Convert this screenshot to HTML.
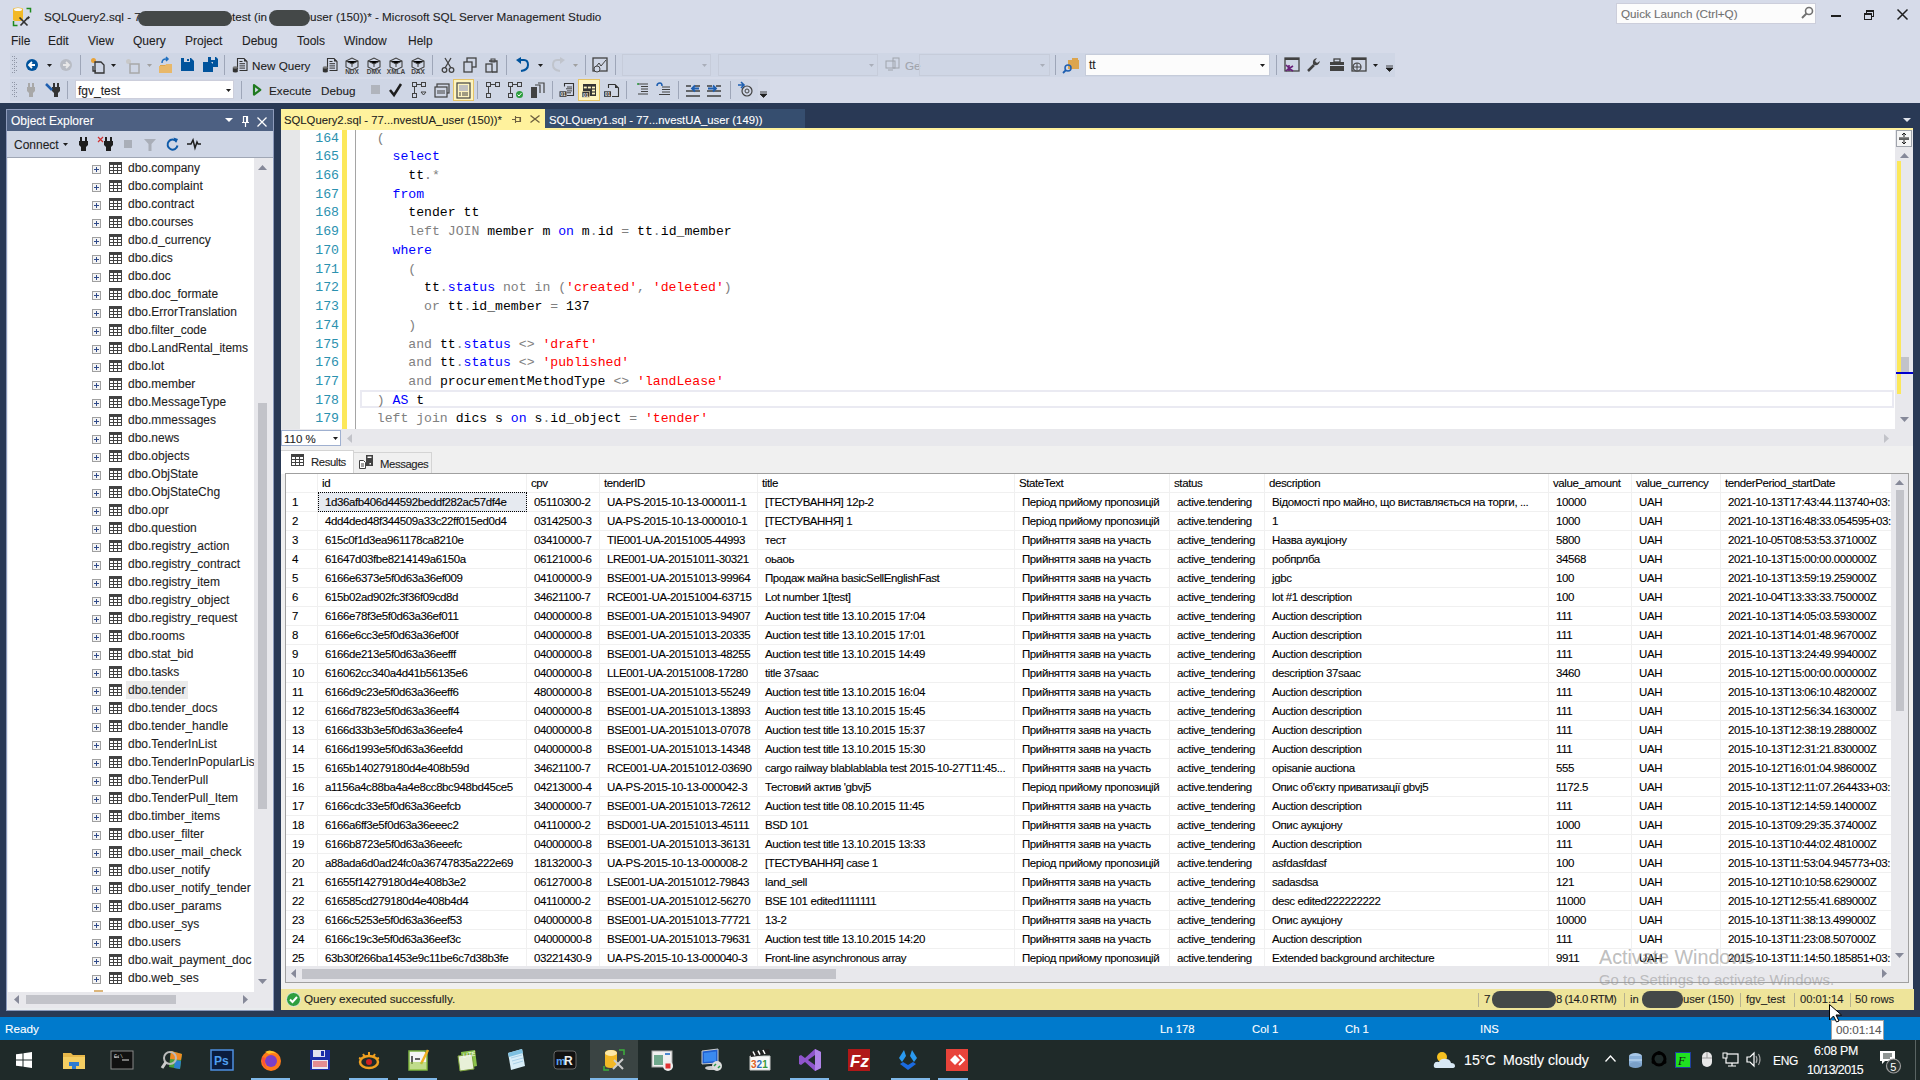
<!DOCTYPE html><html><head><meta charset="utf-8"><style>
html,body{margin:0;padding:0;}
body{width:1920px;height:1080px;overflow:hidden;position:relative;background:#D6DBE9;font-family:"Liberation Sans",sans-serif;font-size:12px;color:#1E1E1E;}
div{position:absolute;box-sizing:border-box;}
.t{white-space:pre;line-height:14px;-webkit-text-stroke:0.1px;}
.m{-webkit-text-stroke:0;}
.m{font-family:"Liberation Mono",monospace;}
svg{position:absolute;overflow:visible;}
</style></head><body>

<svg style="left:12px;top:7px;" width="20" height="20" viewBox="0 0 20 20"><path d="M1 2.5Q1 0.6 6 0.6Q11 0.6 11 2.5V12.5Q11 14 6 14Q1 14 1 12.5Z" fill="#F2B826"/><ellipse cx="6" cy="2.6" rx="4" ry="1.5" fill="#FAFAFA"/><path d="M14.5 1.5H18.5V5.5M1.5 14V18.5H5.5" stroke="#1E8A1E" stroke-width="1.5" fill="none"/><path d="M7.5 10.5L15.5 18.5M8.5 18.5L15.5 11" stroke="#333" stroke-width="1.7"/><path d="M14 11.5l2.5-2.5 1.5 1.5-2 2z" fill="#333"/></svg>
<div class="t" style="left:44px;top:10px;font-size:11.7px;">SQLQuery2.sql - 7</div>
<div style="left:138px;top:11px;width:94px;height:15px;background:#444848;border-radius:8px;"></div>
<div class="t" style="left:232px;top:10px;font-size:11.7px;">test (in</div>
<div style="left:269px;top:10px;width:41px;height:16px;background:#444848;border-radius:8px;"></div>
<div class="t" style="left:310px;top:10px;font-size:11.7px;">user (150))* - Microsoft SQL Server Management Studio</div>
<div style="left:1616px;top:3px;width:200px;height:21px;background:#FCFCFC;border:1px solid #CCCEDB;"></div>
<div class="t" style="left:1621px;top:7px;color:#717171;font-size:11.7px;">Quick Launch (Ctrl+Q)</div>
<svg style="left:1800px;top:6px;" width="13" height="13" viewBox="0 0 13 13"><circle cx="9" cy="5" r="3.5" stroke="#717171" stroke-width="1.6" fill="none"/><path d="M6.5 7.5L2 12" stroke="#717171" stroke-width="2"/></svg>
<div style="left:1831px;top:15px;width:10px;height:2px;background:#1E1E1E;"></div>
<div style="left:1866px;top:10px;width:8px;height:7px;border:1px solid #1E1E1E;border-top-width:2px;"></div>
<div style="left:1864px;top:13px;width:8px;height:7px;border:1px solid #1E1E1E;border-top-width:2px;background:#D6DBE9"></div>
<svg style="left:1897px;top:9px;" width="11" height="11" viewBox="0 0 11 11"><path d="M0.5 0.5L10.5 10.5M10.5 0.5L0.5 10.5" stroke="#1E1E1E" stroke-width="1.5"/></svg>
<div class="t" style="left:11px;top:34px;font-size:12px;">File</div>
<div class="t" style="left:48px;top:34px;font-size:12px;">Edit</div>
<div class="t" style="left:88px;top:34px;font-size:12px;">View</div>
<div class="t" style="left:133px;top:34px;font-size:12px;">Query</div>
<div class="t" style="left:185px;top:34px;font-size:12px;">Project</div>
<div class="t" style="left:242px;top:34px;font-size:12px;">Debug</div>
<div class="t" style="left:297px;top:34px;font-size:12px;">Tools</div>
<div class="t" style="left:344px;top:34px;font-size:12px;">Window</div>
<div class="t" style="left:408px;top:34px;font-size:12px;">Help</div>
<div style="left:10px;top:53px;width:1385px;height:24px;background:#CFD6E5;"></div>
<svg style="left:12px;top:56px;" width="5" height="18" viewBox="0 0 5 18"><rect x="0" y="0" width="1" height="1" fill="#8F96A6"/><rect x="2" y="0" width="1" height="1" fill="#8F96A6"/><rect x="2" y="2" width="1" height="1" fill="#8F96A6"/><rect x="4" y="2" width="1" height="1" fill="#8F96A6"/><rect x="0" y="4" width="1" height="1" fill="#8F96A6"/><rect x="2" y="4" width="1" height="1" fill="#8F96A6"/><rect x="2" y="6" width="1" height="1" fill="#8F96A6"/><rect x="4" y="6" width="1" height="1" fill="#8F96A6"/><rect x="0" y="8" width="1" height="1" fill="#8F96A6"/><rect x="2" y="8" width="1" height="1" fill="#8F96A6"/><rect x="2" y="10" width="1" height="1" fill="#8F96A6"/><rect x="4" y="10" width="1" height="1" fill="#8F96A6"/><rect x="0" y="12" width="1" height="1" fill="#8F96A6"/><rect x="2" y="12" width="1" height="1" fill="#8F96A6"/><rect x="2" y="14" width="1" height="1" fill="#8F96A6"/><rect x="4" y="14" width="1" height="1" fill="#8F96A6"/><rect x="0" y="16" width="1" height="1" fill="#8F96A6"/><rect x="2" y="16" width="1" height="1" fill="#8F96A6"/></svg>
<svg style="left:26px;top:59px;" width="12" height="12" viewBox="0 0 12 12"><circle cx="6" cy="6" r="6" fill="#00539C"/><path d="M9 6H3.5M6 3L3 6L6 9" stroke="#fff" stroke-width="1.8" fill="none"/></svg>
<svg style="left:47px;top:64px;" width="5" height="3" viewBox="0 0 5 3"><path d="M0 0H5L2.5 3Z" fill="#1E1E1E"/></svg>
<svg style="left:60px;top:59px;" width="12" height="12" viewBox="0 0 12 12"><circle cx="6" cy="6" r="6" fill="#B8BCC4"/><path d="M3 6H8.5M6 3L9 6L6 9" stroke="#E8E8E8" stroke-width="1.8" fill="none"/></svg>
<div style="left:80px;top:55px;width:1px;height:20px;background:#9EA6B8;"></div>
<svg style="left:90px;top:57px;" width="16" height="16" viewBox="0 0 16 16"><circle cx="3.5" cy="3.5" r="2.5" fill="#E8A33A"/><path d="M5 5h6l3 3v8H5z" fill="none" stroke="#333" stroke-width="1.3"/><path d="M3 9v5h3" stroke="#333" stroke-width="1.3" fill="none"/></svg>
<svg style="left:111px;top:64px;" width="5" height="3" viewBox="0 0 5 3"><path d="M0 0H5L2.5 3Z" fill="#1E1E1E"/></svg>
<svg style="left:125px;top:58px;" width="16" height="16" viewBox="0 0 16 16"><circle cx="3.5" cy="3.5" r="2.5" fill="#C8C8C8"/><rect x="5" y="6" width="9" height="9" fill="none" stroke="#A8A8A8" stroke-width="1.5"/></svg>
<svg style="left:147px;top:64px;" width="5" height="3" viewBox="0 0 5 3"><path d="M0 0H5L2.5 3Z" fill="#A0A0A0"/></svg>
<svg style="left:158px;top:57px;" width="16" height="16" viewBox="0 0 16 16"><path d="M2 8h12v8H2z" fill="#DCA54E"/><path d="M1 9h6l1-2h6v9H1z" fill="#E8B86A"/><path d="M4 6 Q4 2 8 2h2M8 0l2 2-2 2" stroke="#1F6FC0" stroke-width="1.5" fill="none"/></svg>
<svg style="left:181px;top:58px;" width="14" height="14" viewBox="0 0 14 14"><path d="M0 0h10l3 3v10H0z" fill="#00539C"/><rect x="3" y="0" width="6" height="4" fill="#CFD6E5"/><rect x="6" y="1" width="2" height="2" fill="#00539C"/></svg>
<svg style="left:203px;top:57px;" width="16" height="16" viewBox="0 0 16 16"><path d="M0 5h8l2 2v8H0z" fill="#00539C"/><path d="M5 0h8l2 2v8h-5V5H5z" fill="#00539C"/><rect x="8" y="0" width="4" height="3" fill="#CFD6E5"/></svg>
<div style="left:224px;top:55px;width:1px;height:20px;background:#9EA6B8;"></div>
<svg style="left:232px;top:57px;" width="16" height="16" viewBox="0 0 16 16"><path d="M5.5 12V1.5H12L15 4.5V13.5H7.5" fill="none" stroke="#333" stroke-width="1.1"/><path d="M12 1.5V4.5H15Z" fill="#333"/><path d="M7.5 4.5H10.5M7.5 6.7H13M7.5 8.9H13M7.5 11.1H13" stroke="#333" stroke-width="1"/><rect x="0.8" y="10.5" width="5" height="4" fill="#333"/><ellipse cx="3.3" cy="10.5" rx="2.5" ry="1.2" fill="#777"/><ellipse cx="3.3" cy="14.5" rx="2.5" ry="1" fill="#333"/></svg>
<div class="t" style="left:252px;top:59px;font-size:11.7px;">New Query</div>
<svg style="left:322px;top:57px;" width="16" height="16" viewBox="0 0 16 16"><path d="M5.5 12V1.5H12L15 4.5V13.5H7.5" fill="none" stroke="#333" stroke-width="1.1"/><path d="M12 1.5V4.5H15Z" fill="#333"/><path d="M7.5 4.5H10.5M7.5 6.7H13M7.5 8.9H13M7.5 11.1H13" stroke="#333" stroke-width="1"/><rect x="0.8" y="10.5" width="5" height="4" fill="#333"/><ellipse cx="3.3" cy="10.5" rx="2.5" ry="1.2" fill="#777"/><ellipse cx="3.3" cy="14.5" rx="2.5" ry="1" fill="#333"/></svg>
<svg style="left:344px;top:57px;" width="16" height="17" viewBox="0 0 16 17"><path d="M2 4L8 1L14 4V10L8 13L2 10Z" fill="none" stroke="#424242" stroke-width="1.1"/><path d="M2 4L8 7L14 4M8 7V10" stroke="#424242" stroke-width="1"/><text x="8" y="17" font-size="6.5" font-family="Liberation Sans" font-weight="bold" text-anchor="middle" fill="#424242">NDX</text></svg>
<svg style="left:366px;top:57px;" width="16" height="17" viewBox="0 0 16 17"><path d="M2 4L8 1L14 4V10L8 13L2 10Z" fill="none" stroke="#424242" stroke-width="1.1"/><path d="M2 4L8 7L14 4M8 7V10" stroke="#424242" stroke-width="1"/><text x="8" y="17" font-size="6.5" font-family="Liberation Sans" font-weight="bold" text-anchor="middle" fill="#424242">DMX</text></svg>
<svg style="left:388px;top:57px;" width="16" height="17" viewBox="0 0 16 17"><path d="M2 4L8 1L14 4V10L8 13L2 10Z" fill="none" stroke="#424242" stroke-width="1.1"/><path d="M2 4L8 7L14 4M8 7V10" stroke="#424242" stroke-width="1"/><text x="8" y="17" font-size="6.5" font-family="Liberation Sans" font-weight="bold" text-anchor="middle" fill="#424242">XMLA</text></svg>
<svg style="left:410px;top:57px;" width="16" height="17" viewBox="0 0 16 17"><path d="M2 4L8 1L14 4V10L8 13L2 10Z" fill="none" stroke="#424242" stroke-width="1.1"/><path d="M2 4L8 7L14 4M8 7V10" stroke="#424242" stroke-width="1"/><text x="8" y="17" font-size="6.5" font-family="Liberation Sans" font-weight="bold" text-anchor="middle" fill="#424242">DAX</text></svg>
<div style="left:432px;top:55px;width:1px;height:20px;background:#9EA6B8;"></div>
<svg style="left:441px;top:57px;" width="14" height="16" viewBox="0 0 14 16"><path d="M4 1L10 11M10 1L4 11" stroke="#424242" stroke-width="1.3"/><circle cx="3.5" cy="13" r="2.3" fill="none" stroke="#424242" stroke-width="1.3"/><circle cx="10.5" cy="13" r="2.3" fill="none" stroke="#424242" stroke-width="1.3"/></svg>
<svg style="left:463px;top:57px;" width="14" height="16" viewBox="0 0 14 16"><rect x="4" y="1" width="9" height="9" fill="none" stroke="#424242" stroke-width="1.3"/><rect x="1" y="5" width="8" height="10" fill="#CFD6E5" stroke="#424242" stroke-width="1.3"/></svg>
<svg style="left:485px;top:57px;" width="14" height="16" viewBox="0 0 14 16"><rect x="1" y="7" width="6" height="8" fill="none" stroke="#424242" stroke-width="1.3"/><path d="M4 4h8v11H7" fill="none" stroke="#424242" stroke-width="1.3"/><rect x="6" y="2" width="4" height="3" fill="none" stroke="#424242"/></svg>
<div style="left:506px;top:55px;width:1px;height:20px;background:#9EA6B8;"></div>
<svg style="left:515px;top:57px;" width="15" height="16" viewBox="0 0 15 16"><path d="M4 3 H9 Q13 3 13 8 Q13 13 6 14" stroke="#00539C" stroke-width="2" fill="none"/><path d="M1 3L6 0V7Z" fill="#00539C"/></svg>
<svg style="left:538px;top:64px;" width="5" height="3" viewBox="0 0 5 3"><path d="M0 0H5L2.5 3Z" fill="#1E1E1E"/></svg>
<svg style="left:551px;top:57px;" width="15" height="16" viewBox="0 0 15 16"><path d="M11 3 H6 Q2 3 2 8 Q2 13 9 14" stroke="#C0C4CC" stroke-width="2" fill="none"/><path d="M14 3L9 0V7Z" fill="#C0C4CC"/></svg>
<svg style="left:573px;top:64px;" width="5" height="3" viewBox="0 0 5 3"><path d="M0 0H5L2.5 3Z" fill="#A0A0A0"/></svg>
<div style="left:585px;top:55px;width:1px;height:20px;background:#9EA6B8;"></div>
<svg style="left:592px;top:57px;" width="16" height="16" viewBox="0 0 16 16"><rect x="1" y="1" width="14" height="13" fill="none" stroke="#424242" stroke-width="1.3"/><path d="M3 11L7 6L9 9L14 3" stroke="#424242" fill="none"/><circle cx="5" cy="12" r="3" fill="#CFD6E5" stroke="#424242"/></svg>
<div style="left:615px;top:55px;width:1px;height:20px;background:#9EA6B8;"></div>
<div style="left:622px;top:54px;width:89px;height:22px;border:1px solid #C6CCDA;"></div>
<svg style="left:702px;top:64px;" width="5" height="3" viewBox="0 0 5 3"><path d="M0 0H5L2.5 3Z" fill="#A9AEB9"/></svg>
<div style="left:718px;top:54px;width:160px;height:22px;border:1px solid #C6CCDA;"></div>
<svg style="left:869px;top:64px;" width="5" height="3" viewBox="0 0 5 3"><path d="M0 0H5L2.5 3Z" fill="#A9AEB9"/></svg>
<svg style="left:885px;top:57px;" width="16" height="16" viewBox="0 0 16 16"><rect x="1" y="4" width="9" height="7" fill="none" stroke="#A0A4AC"/><rect x="8" y="1" width="6" height="10" fill="none" stroke="#A0A4AC"/><path d="M3 13h5" stroke="#A0A4AC"/></svg>
<div class="t" style="left:905px;top:59px;color:#A0A4AC;font-size:11.7px;">Ge</div>
<div style="left:919px;top:54px;width:131px;height:22px;border:1px solid #C6CCDA;"></div>
<svg style="left:1040px;top:64px;" width="5" height="3" viewBox="0 0 5 3"><path d="M0 0H5L2.5 3Z" fill="#A9AEB9"/></svg>
<div style="left:1055px;top:55px;width:1px;height:20px;background:#9EA6B8;"></div>
<svg style="left:1063px;top:57px;" width="16" height="16" viewBox="0 0 16 16"><rect x="5" y="3" width="11" height="9" fill="#DCA54E"/><rect x="9" y="1" width="6" height="3" fill="#DCA54E"/><circle cx="5" cy="11" r="3" fill="none" stroke="#1F5FB0" stroke-width="1.5"/><path d="M3 13L0 16" stroke="#1F5FB0" stroke-width="1.8"/></svg>
<div style="left:1085px;top:54px;width:185px;height:22px;background:#FCFCFC;border:1px solid #C6CCDA;"></div>
<div class="t" style="left:1089px;top:58px;font-size:12px;">tt</div>
<svg style="left:1260px;top:64px;" width="5" height="3" viewBox="0 0 5 3"><path d="M0 0H5L2.5 3Z" fill="#1E1E1E"/></svg>
<div style="left:1276px;top:55px;width:1px;height:20px;background:#9EA6B8;"></div>
<svg style="left:1284px;top:57px;" width="16" height="16" viewBox="0 0 16 16"><rect x="1" y="1" width="14" height="13" fill="none" stroke="#424242" stroke-width="1.3"/><rect x="1" y="1" width="14" height="2" fill="#424242"/><path d="M2 8L5 11L2 14M5 8v6M9 9l-4 2.5L9 14" stroke="#68217A" stroke-width="1.6" fill="none"/></svg>
<svg style="left:1306px;top:57px;" width="16" height="16" viewBox="0 0 16 16"><path d="M2 14L8 8" stroke="#424242" stroke-width="2.5"/><path d="M7 7 Q6 2 11 1 L9 4 L11 6 L14 4 Q13 9 8 8" fill="#424242"/></svg>
<svg style="left:1329px;top:58px;" width="16" height="16" viewBox="0 0 16 16"><rect x="1" y="4" width="14" height="9" fill="#424242"/><rect x="5" y="1" width="6" height="3" fill="none" stroke="#424242" stroke-width="1.3"/><rect x="1" y="7" width="14" height="1" fill="#CFD6E5"/></svg>
<svg style="left:1351px;top:57px;" width="16" height="16" viewBox="0 0 16 16"><rect x="1" y="1" width="14" height="13" fill="none" stroke="#424242" stroke-width="1.3"/><rect x="1" y="1" width="14" height="2" fill="#424242"/><circle cx="6" cy="10" r="4" fill="#CFD6E5" stroke="#424242" stroke-width="1.2"/><path d="M2 10h8M6 6v8" stroke="#424242"/></svg>
<svg style="left:1373px;top:64px;" width="5" height="3" viewBox="0 0 5 3"><path d="M0 0H5L2.5 3Z" fill="#1E1E1E"/></svg>
<svg style="left:1386px;top:66px;" width="8" height="6" viewBox="0 0 8 6"><path d="M0 0h7M0 2h7L3.5 5.5Z" stroke="#1E1E1E" fill="#1E1E1E" stroke-width="0.8"/></svg>
<div style="left:10px;top:79px;width:748px;height:22px;background:#CFD6E5;"></div>
<div style="left:758px;top:79px;width:12px;height:22px;background:#D3D9E7;"></div>
<svg style="left:12px;top:82px;" width="5" height="16" viewBox="0 0 5 16"><rect x="0" y="0" width="1" height="1" fill="#8F96A6"/><rect x="2" y="0" width="1" height="1" fill="#8F96A6"/><rect x="2" y="2" width="1" height="1" fill="#8F96A6"/><rect x="4" y="2" width="1" height="1" fill="#8F96A6"/><rect x="0" y="4" width="1" height="1" fill="#8F96A6"/><rect x="2" y="4" width="1" height="1" fill="#8F96A6"/><rect x="2" y="6" width="1" height="1" fill="#8F96A6"/><rect x="4" y="6" width="1" height="1" fill="#8F96A6"/><rect x="0" y="8" width="1" height="1" fill="#8F96A6"/><rect x="2" y="8" width="1" height="1" fill="#8F96A6"/><rect x="2" y="10" width="1" height="1" fill="#8F96A6"/><rect x="4" y="10" width="1" height="1" fill="#8F96A6"/><rect x="0" y="12" width="1" height="1" fill="#8F96A6"/><rect x="2" y="12" width="1" height="1" fill="#8F96A6"/><rect x="2" y="14" width="1" height="1" fill="#8F96A6"/><rect x="4" y="14" width="1" height="1" fill="#8F96A6"/></svg>
<svg style="left:27px;top:83px;" width="8" height="14" viewBox="0 0 8 14"><rect x="1" y="0" width="2" height="4" fill="#A8A8A8"/><rect x="5" y="0" width="2" height="4" fill="#A8A8A8"/><path d="M0 4h8v4l-2 2v4H2v-4L0 8z" fill="#A8A8A8"/></svg>
<svg style="left:45px;top:82px;" width="16" height="16" viewBox="0 0 16 16"><rect x="8" y="1" width="2" height="4" fill="#333"/><rect x="12" y="1" width="2" height="4" fill="#333"/><path d="M7 5h8v4l-2 2v4h-4v-4L7 9z" fill="#333"/><path d="M1 2L7 8" stroke="#1F5FB0" stroke-width="2.5"/></svg>
<div style="left:67px;top:81px;width:1px;height:18px;background:#9EA6B8;"></div>
<div style="left:75px;top:80px;width:159px;height:19px;background:#FFFFFF;border:1px solid #CCCEDB;"></div>
<div class="t" style="left:78px;top:84px;font-size:12px;">fgv_test</div>
<svg style="left:226px;top:89px;" width="5" height="3" viewBox="0 0 5 3"><path d="M0 0H5L2.5 3Z" fill="#1E1E1E"/></svg>
<div style="left:241px;top:81px;width:1px;height:18px;background:#9EA6B8;"></div>
<svg style="left:252px;top:83px;" width="11" height="14" viewBox="0 0 11 14"><path d="M2 2L8.3 6.8L2 11.6Z" fill="#D4DAE8" stroke="#1F7A1F" stroke-width="2.2" stroke-linejoin="round"/></svg>
<div class="t" style="left:269px;top:84px;font-size:11.7px;">Execute</div>
<div class="t" style="left:321px;top:84px;font-size:11.7px;">Debug</div>
<div style="left:371px;top:85px;width:9px;height:9px;background:#B0B4BC;"></div>
<svg style="left:389px;top:83px;" width="13" height="14" viewBox="0 0 13 14"><path d="M1 7L5 12L12 1" stroke="#1E1E1E" stroke-width="2.5" fill="none"/></svg>
<svg style="left:412px;top:82px;" width="15" height="16" viewBox="0 0 15 16"><rect x="0.5" y="0.5" width="4" height="4" fill="none" stroke="#424242"/><rect x="9.5" y="0.5" width="4" height="4" fill="none" stroke="#424242"/><rect x="0.5" y="11.5" width="4" height="4" fill="none" stroke="#424242"/><path d="M5 2.5h4M2.5 5v6M9 10l2.5 3l2.5-3z" stroke="#424242" fill="none"/></svg>
<svg style="left:434px;top:83px;" width="16" height="15" viewBox="0 0 16 15"><rect x="3" y="1" width="12" height="9" fill="none" stroke="#424242" stroke-width="1.2"/><rect x="1" y="4" width="12" height="10" fill="#CFD6E5" stroke="#424242" stroke-width="1.2"/><path d="M3 8h8M3 10h8" stroke="#424242"/></svg>
<div style="left:453px;top:79px;width:21px;height:22px;background:#FDF4BF;border:1px solid #E5C365;"></div>
<svg style="left:456px;top:82px;" width="15" height="17" viewBox="0 0 15 17"><rect x="1" y="1" width="13" height="15" fill="none" stroke="#424242" stroke-width="1.2"/><rect x="3" y="3" width="9" height="6" fill="#C0C0C0"/><path d="M3 11h2M6 11h6M3 13h2M6 13h6" stroke="#424242"/></svg>
<div style="left:477px;top:81px;width:1px;height:18px;background:#9EA6B8;"></div>
<svg style="left:486px;top:82px;" width="15" height="16" viewBox="0 0 15 16"><rect x="0.5" y="0.5" width="4" height="4" fill="none" stroke="#424242"/><rect x="9.5" y="0.5" width="4" height="4" fill="none" stroke="#424242"/><rect x="0.5" y="11.5" width="4" height="4" fill="none" stroke="#424242"/><path d="M5 2.5h4M2.5 5v6" stroke="#424242" fill="none"/></svg>
<svg style="left:508px;top:82px;" width="15" height="16" viewBox="0 0 15 16"><rect x="0.5" y="0.5" width="4" height="4" fill="none" stroke="#424242"/><rect x="9.5" y="0.5" width="4" height="4" fill="none" stroke="#424242"/><rect x="0.5" y="11.5" width="4" height="4" fill="none" stroke="#424242"/><path d="M5 2.5h4M2.5 5v6" stroke="#424242" fill="none"/><circle cx="11.5" cy="12.5" r="3.5" fill="#2E9E3E"/><path d="M9.5 12.5l1.5 1.5 2.5-3" stroke="#fff" fill="none"/></svg>
<svg style="left:530px;top:82px;" width="15" height="16" viewBox="0 0 15 16"><rect x="1" y="5" width="6" height="11" fill="#424242"/><path d="M5 3h5v8M8 1h6v10" fill="none" stroke="#424242" stroke-width="1.2"/></svg>
<div style="left:552px;top:81px;width:1px;height:18px;background:#9EA6B8;"></div>
<svg style="left:559px;top:82px;" width="16" height="16" viewBox="0 0 16 16"><path d="M5.5 4.5V1.5H14.5V13.5H8" fill="none" stroke="#333" stroke-width="1.1"/><path d="M8 5H13M7 6.8H13M8 8.9H13M8 10.8H12" stroke="#333" stroke-width="0.9"/><rect x="0.5" y="9.3" width="7" height="5.5" fill="#333"/><text x="1.2" y="14" font-size="5" font-weight="bold" fill="#E8E8E8" font-family="Liberation Sans">01</text></svg>
<div style="left:578px;top:79px;width:22px;height:22px;background:#FDF4BF;border:1px solid #E5C365;"></div>
<svg style="left:582px;top:83px;" width="16" height="16" viewBox="0 0 16 16"><rect x="1" y="1" width="13" height="12" fill="#333"/><rect x="1.8" y="3.6" width="3" height="1.8" fill="#FDF4BF"/><rect x="5.9" y="3.6" width="3" height="1.8" fill="#FDF4BF"/><rect x="10" y="3.6" width="3" height="1.8" fill="#FDF4BF"/><rect x="10" y="6.6" width="3" height="1.8" fill="#FDF4BF"/><rect x="10" y="9.6" width="3" height="1.8" fill="#FDF4BF"/><rect x="0" y="8.3" width="7.5" height="6" fill="#333" stroke="#FDF4BF" stroke-width="0.6"/><text x="1" y="13.5" font-size="5" font-weight="bold" fill="#E8E8E8" font-family="Liberation Sans">01</text></svg>
<svg style="left:603px;top:82px;" width="16" height="16" viewBox="0 0 16 16"><path d="M5.5 6V2.5H12L15.5 6V14.5H9" fill="none" stroke="#333" stroke-width="1.1"/><path d="M12 2.5V6H15.5Z" fill="#333"/><rect x="1" y="9.3" width="7" height="5.5" fill="#333"/><text x="1.7" y="14" font-size="5" font-weight="bold" fill="#E8E8E8" font-family="Liberation Sans">01</text></svg>
<div style="left:626px;top:81px;width:1px;height:18px;background:#9EA6B8;"></div>
<svg style="left:636px;top:83px;" width="13" height="13" viewBox="0 0 13 13"><path d="M2 1h10M5 3.5h7M5 6h7M5 8.5h7M2 11h10" stroke="#424242" stroke-width="1.1"/><path d="M1 1h2" stroke="#2E9E3E" stroke-width="1.5"/></svg>
<svg style="left:656px;top:82px;" width="15" height="14" viewBox="0 0 15 14"><path d="M1 4 Q1 1 4 1 Q6 1 6 4" stroke="#1F5FB0" stroke-width="1.5" fill="none"/><path d="M6 5h8M6 7.5h8M6 10h8M3 12.5h11" stroke="#424242" stroke-width="1.1"/></svg>
<div style="left:678px;top:81px;width:1px;height:18px;background:#9EA6B8;"></div>
<svg style="left:686px;top:83px;" width="15" height="15" viewBox="0 0 15 15"><path d="M0 3h5M0 8h14M0 13h14M9 3h5" stroke="#424242" stroke-width="1.6"/><path d="M13 5.5H6M9 2.5L6 5.5L9 8.5" stroke="#1F5FB0" stroke-width="1.8" fill="none"/></svg>
<svg style="left:707px;top:83px;" width="15" height="15" viewBox="0 0 15 15"><path d="M0 3h5M0 8h14M0 13h14M9 3h5" stroke="#424242" stroke-width="1.6"/><path d="M1 5.5H9M6 2.5L9 5.5L6 8.5" stroke="#1F5FB0" stroke-width="1.8" fill="none"/></svg>
<div style="left:730px;top:81px;width:1px;height:18px;background:#9EA6B8;"></div>
<svg style="left:737px;top:82px;" width="16" height="16" viewBox="0 0 16 16"><circle cx="10" cy="9" r="5" fill="none" stroke="#424242" stroke-width="1.2"/><circle cx="10" cy="9" r="2" fill="none" stroke="#424242"/><path d="M1 3h6M4 0l3 3-3 3" stroke="#1F5FB0" stroke-width="1.6" fill="none"/></svg>
<svg style="left:760px;top:92px;" width="8" height="6" viewBox="0 0 8 6"><path d="M0 0h7M0 2h7L3.5 5.5Z" stroke="#1E1E1E" fill="#1E1E1E" stroke-width="0.8"/></svg>
<div style="left:0px;top:103px;width:1920px;height:914px;background:#293955;"></div>
<div style="left:6px;top:109px;width:268px;height:902px;background:#E9ECEE;border:1px solid #8E9BBC;"></div>
<div style="left:7px;top:110px;width:266px;height:21px;background:#4D6082;"></div>
<div class="t" style="left:11px;top:114px;color:#FFFFFF;font-size:12px;">Object Explorer</div>
<svg style="left:225px;top:118px;" width="8" height="4" viewBox="0 0 8 4"><path d="M0 0H8L4 4Z" fill="#fff"/></svg>
<svg style="left:242px;top:116px;" width="7" height="11" viewBox="0 0 7 11"><path d="M1.5 0.5h4v6h-4z M0 6.5h7 M3.5 6.5v4.5" stroke="#fff" stroke-width="1.2" fill="none"/><rect x="4" y="1" width="1.5" height="5.5" fill="#fff"/></svg>
<svg style="left:257px;top:117px;" width="10" height="10" viewBox="0 0 10 10"><path d="M0.5 0.5L9.5 9.5M9.5 0.5L0.5 9.5" stroke="#fff" stroke-width="1.3"/></svg>
<div style="left:7px;top:131px;width:266px;height:27px;background:#CFD6E5;"></div>
<div class="t" style="left:14px;top:138px;font-size:12px;">Connect</div>
<svg style="left:63px;top:143px;" width="5" height="3" viewBox="0 0 5 3"><path d="M0 0H5L2.5 3Z" fill="#1E1E1E"/></svg>
<svg style="left:79px;top:137px;" width="9" height="14" viewBox="0 0 9 14"><rect x="1" y="0" width="2" height="4" fill="#1E1E1E"/><rect x="6" y="0" width="2" height="4" fill="#1E1E1E"/><path d="M0 4h9v4l-2 2v4H2v-4L0 8z" fill="#1E1E1E"/></svg>
<svg style="left:98px;top:137px;" width="15" height="14" viewBox="0 0 15 14"><path d="M0 0L5 5M5 0L0 5" stroke="#D03030" stroke-width="1.2"/><rect x="7" y="0" width="2" height="4" fill="#1E1E1E"/><rect x="12" y="0" width="2" height="4" fill="#1E1E1E"/><path d="M6 4h9v4l-2 2v4H8v-4L6 8z" fill="#1E1E1E"/></svg>
<div style="left:124px;top:140px;width:8px;height:8px;background:#A9AEB8;"></div>
<svg style="left:144px;top:139px;" width="12" height="12" viewBox="0 0 12 12"><path d="M0 0H12L7.5 5V12H4.5V5Z" fill="#A9AEB8"/></svg>
<svg style="left:166px;top:137px;" width="13" height="14" viewBox="0 0 13 14"><path d="M10.5 4.5 A5 5 0 1 0 11.5 8.5" stroke="#0E5AA8" stroke-width="2" fill="none"/><path d="M7.5 0.5L12 2L10 6Z" fill="#0E5AA8"/></svg>
<svg style="left:187px;top:137px;" width="14" height="13" viewBox="0 0 14 13"><path d="M0 7H4L6 3L8 11L10 5L11 7H14" stroke="#1E1E1E" stroke-width="1.5" fill="none"/></svg>
<div style="left:7px;top:157px;width:266px;height:1px;background:#A0A7B5;"></div>
<div style="left:8px;top:158px;width:246px;height:834px;background:#FFFFFF;"></div>
<div style="left:254px;top:158px;width:18px;height:834px;background:#E8E8EC;"></div>
<svg style="left:258px;top:165px;" width="9" height="5" viewBox="0 0 9 5"><path d="M0 5H9L4.5 0Z" fill="#868999"/></svg>
<svg style="left:258px;top:979px;" width="9" height="5" viewBox="0 0 9 5"><path d="M0 0H9L4.5 5Z" fill="#868999"/></svg>
<div style="left:258px;top:403px;width:9px;height:406px;background:#C2C3C9;"></div>
<div style="left:8px;top:158px;width:246px;height:834px;overflow:hidden;">
<div style="left:118px;top:523px;width:62px;height:18px;background:#EBEBEB;"></div>
<div style="left:84px;top:7px;width:9px;height:9px;border:1px solid #A0A0A0;background:#F4F4F4;"></div>
<div style="left:86px;top:11px;width:5px;height:1px;background:#2F4A8A;"></div>
<div style="left:88px;top:9px;width:1px;height:5px;background:#2F4A8A;"></div>
<svg style="left:101px;top:4px" width="13" height="12" viewBox="0 0 13 12"><rect x="0" y="0" width="13" height="12" fill="#424242"/><g fill="#fff"><rect x="1" y="3" width="3" height="2"/><rect x="5" y="3" width="3" height="2"/><rect x="9" y="3" width="3" height="2"/><rect x="1" y="6" width="3" height="2"/><rect x="5" y="6" width="3" height="2"/><rect x="9" y="6" width="3" height="2"/><rect x="1" y="9" width="3" height="2"/><rect x="5" y="9" width="3" height="2"/><rect x="9" y="9" width="3" height="2"/></g></svg>
<div class="t" style="left:120px;top:3px;font-size:12px;color:#1E1E1E;">dbo.company</div>
<div style="left:84px;top:25px;width:9px;height:9px;border:1px solid #A0A0A0;background:#F4F4F4;"></div>
<div style="left:86px;top:29px;width:5px;height:1px;background:#2F4A8A;"></div>
<div style="left:88px;top:27px;width:1px;height:5px;background:#2F4A8A;"></div>
<svg style="left:101px;top:22px" width="13" height="12" viewBox="0 0 13 12"><rect x="0" y="0" width="13" height="12" fill="#424242"/><g fill="#fff"><rect x="1" y="3" width="3" height="2"/><rect x="5" y="3" width="3" height="2"/><rect x="9" y="3" width="3" height="2"/><rect x="1" y="6" width="3" height="2"/><rect x="5" y="6" width="3" height="2"/><rect x="9" y="6" width="3" height="2"/><rect x="1" y="9" width="3" height="2"/><rect x="5" y="9" width="3" height="2"/><rect x="9" y="9" width="3" height="2"/></g></svg>
<div class="t" style="left:120px;top:21px;font-size:12px;color:#1E1E1E;">dbo.complaint</div>
<div style="left:84px;top:43px;width:9px;height:9px;border:1px solid #A0A0A0;background:#F4F4F4;"></div>
<div style="left:86px;top:47px;width:5px;height:1px;background:#2F4A8A;"></div>
<div style="left:88px;top:45px;width:1px;height:5px;background:#2F4A8A;"></div>
<svg style="left:101px;top:40px" width="13" height="12" viewBox="0 0 13 12"><rect x="0" y="0" width="13" height="12" fill="#424242"/><g fill="#fff"><rect x="1" y="3" width="3" height="2"/><rect x="5" y="3" width="3" height="2"/><rect x="9" y="3" width="3" height="2"/><rect x="1" y="6" width="3" height="2"/><rect x="5" y="6" width="3" height="2"/><rect x="9" y="6" width="3" height="2"/><rect x="1" y="9" width="3" height="2"/><rect x="5" y="9" width="3" height="2"/><rect x="9" y="9" width="3" height="2"/></g></svg>
<div class="t" style="left:120px;top:39px;font-size:12px;color:#1E1E1E;">dbo.contract</div>
<div style="left:84px;top:61px;width:9px;height:9px;border:1px solid #A0A0A0;background:#F4F4F4;"></div>
<div style="left:86px;top:65px;width:5px;height:1px;background:#2F4A8A;"></div>
<div style="left:88px;top:63px;width:1px;height:5px;background:#2F4A8A;"></div>
<svg style="left:101px;top:58px" width="13" height="12" viewBox="0 0 13 12"><rect x="0" y="0" width="13" height="12" fill="#424242"/><g fill="#fff"><rect x="1" y="3" width="3" height="2"/><rect x="5" y="3" width="3" height="2"/><rect x="9" y="3" width="3" height="2"/><rect x="1" y="6" width="3" height="2"/><rect x="5" y="6" width="3" height="2"/><rect x="9" y="6" width="3" height="2"/><rect x="1" y="9" width="3" height="2"/><rect x="5" y="9" width="3" height="2"/><rect x="9" y="9" width="3" height="2"/></g></svg>
<div class="t" style="left:120px;top:57px;font-size:12px;color:#1E1E1E;">dbo.courses</div>
<div style="left:84px;top:79px;width:9px;height:9px;border:1px solid #A0A0A0;background:#F4F4F4;"></div>
<div style="left:86px;top:83px;width:5px;height:1px;background:#2F4A8A;"></div>
<div style="left:88px;top:81px;width:1px;height:5px;background:#2F4A8A;"></div>
<svg style="left:101px;top:76px" width="13" height="12" viewBox="0 0 13 12"><rect x="0" y="0" width="13" height="12" fill="#424242"/><g fill="#fff"><rect x="1" y="3" width="3" height="2"/><rect x="5" y="3" width="3" height="2"/><rect x="9" y="3" width="3" height="2"/><rect x="1" y="6" width="3" height="2"/><rect x="5" y="6" width="3" height="2"/><rect x="9" y="6" width="3" height="2"/><rect x="1" y="9" width="3" height="2"/><rect x="5" y="9" width="3" height="2"/><rect x="9" y="9" width="3" height="2"/></g></svg>
<div class="t" style="left:120px;top:75px;font-size:12px;color:#1E1E1E;">dbo.d_currency</div>
<div style="left:84px;top:97px;width:9px;height:9px;border:1px solid #A0A0A0;background:#F4F4F4;"></div>
<div style="left:86px;top:101px;width:5px;height:1px;background:#2F4A8A;"></div>
<div style="left:88px;top:99px;width:1px;height:5px;background:#2F4A8A;"></div>
<svg style="left:101px;top:94px" width="13" height="12" viewBox="0 0 13 12"><rect x="0" y="0" width="13" height="12" fill="#424242"/><g fill="#fff"><rect x="1" y="3" width="3" height="2"/><rect x="5" y="3" width="3" height="2"/><rect x="9" y="3" width="3" height="2"/><rect x="1" y="6" width="3" height="2"/><rect x="5" y="6" width="3" height="2"/><rect x="9" y="6" width="3" height="2"/><rect x="1" y="9" width="3" height="2"/><rect x="5" y="9" width="3" height="2"/><rect x="9" y="9" width="3" height="2"/></g></svg>
<div class="t" style="left:120px;top:93px;font-size:12px;color:#1E1E1E;">dbo.dics</div>
<div style="left:84px;top:115px;width:9px;height:9px;border:1px solid #A0A0A0;background:#F4F4F4;"></div>
<div style="left:86px;top:119px;width:5px;height:1px;background:#2F4A8A;"></div>
<div style="left:88px;top:117px;width:1px;height:5px;background:#2F4A8A;"></div>
<svg style="left:101px;top:112px" width="13" height="12" viewBox="0 0 13 12"><rect x="0" y="0" width="13" height="12" fill="#424242"/><g fill="#fff"><rect x="1" y="3" width="3" height="2"/><rect x="5" y="3" width="3" height="2"/><rect x="9" y="3" width="3" height="2"/><rect x="1" y="6" width="3" height="2"/><rect x="5" y="6" width="3" height="2"/><rect x="9" y="6" width="3" height="2"/><rect x="1" y="9" width="3" height="2"/><rect x="5" y="9" width="3" height="2"/><rect x="9" y="9" width="3" height="2"/></g></svg>
<div class="t" style="left:120px;top:111px;font-size:12px;color:#1E1E1E;">dbo.doc</div>
<div style="left:84px;top:133px;width:9px;height:9px;border:1px solid #A0A0A0;background:#F4F4F4;"></div>
<div style="left:86px;top:137px;width:5px;height:1px;background:#2F4A8A;"></div>
<div style="left:88px;top:135px;width:1px;height:5px;background:#2F4A8A;"></div>
<svg style="left:101px;top:130px" width="13" height="12" viewBox="0 0 13 12"><rect x="0" y="0" width="13" height="12" fill="#424242"/><g fill="#fff"><rect x="1" y="3" width="3" height="2"/><rect x="5" y="3" width="3" height="2"/><rect x="9" y="3" width="3" height="2"/><rect x="1" y="6" width="3" height="2"/><rect x="5" y="6" width="3" height="2"/><rect x="9" y="6" width="3" height="2"/><rect x="1" y="9" width="3" height="2"/><rect x="5" y="9" width="3" height="2"/><rect x="9" y="9" width="3" height="2"/></g></svg>
<div class="t" style="left:120px;top:129px;font-size:12px;color:#1E1E1E;">dbo.doc_formate</div>
<div style="left:84px;top:151px;width:9px;height:9px;border:1px solid #A0A0A0;background:#F4F4F4;"></div>
<div style="left:86px;top:155px;width:5px;height:1px;background:#2F4A8A;"></div>
<div style="left:88px;top:153px;width:1px;height:5px;background:#2F4A8A;"></div>
<svg style="left:101px;top:148px" width="13" height="12" viewBox="0 0 13 12"><rect x="0" y="0" width="13" height="12" fill="#424242"/><g fill="#fff"><rect x="1" y="3" width="3" height="2"/><rect x="5" y="3" width="3" height="2"/><rect x="9" y="3" width="3" height="2"/><rect x="1" y="6" width="3" height="2"/><rect x="5" y="6" width="3" height="2"/><rect x="9" y="6" width="3" height="2"/><rect x="1" y="9" width="3" height="2"/><rect x="5" y="9" width="3" height="2"/><rect x="9" y="9" width="3" height="2"/></g></svg>
<div class="t" style="left:120px;top:147px;font-size:12px;color:#1E1E1E;">dbo.ErrorTranslation</div>
<div style="left:84px;top:169px;width:9px;height:9px;border:1px solid #A0A0A0;background:#F4F4F4;"></div>
<div style="left:86px;top:173px;width:5px;height:1px;background:#2F4A8A;"></div>
<div style="left:88px;top:171px;width:1px;height:5px;background:#2F4A8A;"></div>
<svg style="left:101px;top:166px" width="13" height="12" viewBox="0 0 13 12"><rect x="0" y="0" width="13" height="12" fill="#424242"/><g fill="#fff"><rect x="1" y="3" width="3" height="2"/><rect x="5" y="3" width="3" height="2"/><rect x="9" y="3" width="3" height="2"/><rect x="1" y="6" width="3" height="2"/><rect x="5" y="6" width="3" height="2"/><rect x="9" y="6" width="3" height="2"/><rect x="1" y="9" width="3" height="2"/><rect x="5" y="9" width="3" height="2"/><rect x="9" y="9" width="3" height="2"/></g></svg>
<div class="t" style="left:120px;top:165px;font-size:12px;color:#1E1E1E;">dbo.filter_code</div>
<div style="left:84px;top:187px;width:9px;height:9px;border:1px solid #A0A0A0;background:#F4F4F4;"></div>
<div style="left:86px;top:191px;width:5px;height:1px;background:#2F4A8A;"></div>
<div style="left:88px;top:189px;width:1px;height:5px;background:#2F4A8A;"></div>
<svg style="left:101px;top:184px" width="13" height="12" viewBox="0 0 13 12"><rect x="0" y="0" width="13" height="12" fill="#424242"/><g fill="#fff"><rect x="1" y="3" width="3" height="2"/><rect x="5" y="3" width="3" height="2"/><rect x="9" y="3" width="3" height="2"/><rect x="1" y="6" width="3" height="2"/><rect x="5" y="6" width="3" height="2"/><rect x="9" y="6" width="3" height="2"/><rect x="1" y="9" width="3" height="2"/><rect x="5" y="9" width="3" height="2"/><rect x="9" y="9" width="3" height="2"/></g></svg>
<div class="t" style="left:120px;top:183px;font-size:12px;color:#1E1E1E;">dbo.LandRental_items</div>
<div style="left:84px;top:205px;width:9px;height:9px;border:1px solid #A0A0A0;background:#F4F4F4;"></div>
<div style="left:86px;top:209px;width:5px;height:1px;background:#2F4A8A;"></div>
<div style="left:88px;top:207px;width:1px;height:5px;background:#2F4A8A;"></div>
<svg style="left:101px;top:202px" width="13" height="12" viewBox="0 0 13 12"><rect x="0" y="0" width="13" height="12" fill="#424242"/><g fill="#fff"><rect x="1" y="3" width="3" height="2"/><rect x="5" y="3" width="3" height="2"/><rect x="9" y="3" width="3" height="2"/><rect x="1" y="6" width="3" height="2"/><rect x="5" y="6" width="3" height="2"/><rect x="9" y="6" width="3" height="2"/><rect x="1" y="9" width="3" height="2"/><rect x="5" y="9" width="3" height="2"/><rect x="9" y="9" width="3" height="2"/></g></svg>
<div class="t" style="left:120px;top:201px;font-size:12px;color:#1E1E1E;">dbo.lot</div>
<div style="left:84px;top:223px;width:9px;height:9px;border:1px solid #A0A0A0;background:#F4F4F4;"></div>
<div style="left:86px;top:227px;width:5px;height:1px;background:#2F4A8A;"></div>
<div style="left:88px;top:225px;width:1px;height:5px;background:#2F4A8A;"></div>
<svg style="left:101px;top:220px" width="13" height="12" viewBox="0 0 13 12"><rect x="0" y="0" width="13" height="12" fill="#424242"/><g fill="#fff"><rect x="1" y="3" width="3" height="2"/><rect x="5" y="3" width="3" height="2"/><rect x="9" y="3" width="3" height="2"/><rect x="1" y="6" width="3" height="2"/><rect x="5" y="6" width="3" height="2"/><rect x="9" y="6" width="3" height="2"/><rect x="1" y="9" width="3" height="2"/><rect x="5" y="9" width="3" height="2"/><rect x="9" y="9" width="3" height="2"/></g></svg>
<div class="t" style="left:120px;top:219px;font-size:12px;color:#1E1E1E;">dbo.member</div>
<div style="left:84px;top:241px;width:9px;height:9px;border:1px solid #A0A0A0;background:#F4F4F4;"></div>
<div style="left:86px;top:245px;width:5px;height:1px;background:#2F4A8A;"></div>
<div style="left:88px;top:243px;width:1px;height:5px;background:#2F4A8A;"></div>
<svg style="left:101px;top:238px" width="13" height="12" viewBox="0 0 13 12"><rect x="0" y="0" width="13" height="12" fill="#424242"/><g fill="#fff"><rect x="1" y="3" width="3" height="2"/><rect x="5" y="3" width="3" height="2"/><rect x="9" y="3" width="3" height="2"/><rect x="1" y="6" width="3" height="2"/><rect x="5" y="6" width="3" height="2"/><rect x="9" y="6" width="3" height="2"/><rect x="1" y="9" width="3" height="2"/><rect x="5" y="9" width="3" height="2"/><rect x="9" y="9" width="3" height="2"/></g></svg>
<div class="t" style="left:120px;top:237px;font-size:12px;color:#1E1E1E;">dbo.MessageType</div>
<div style="left:84px;top:259px;width:9px;height:9px;border:1px solid #A0A0A0;background:#F4F4F4;"></div>
<div style="left:86px;top:263px;width:5px;height:1px;background:#2F4A8A;"></div>
<div style="left:88px;top:261px;width:1px;height:5px;background:#2F4A8A;"></div>
<svg style="left:101px;top:256px" width="13" height="12" viewBox="0 0 13 12"><rect x="0" y="0" width="13" height="12" fill="#424242"/><g fill="#fff"><rect x="1" y="3" width="3" height="2"/><rect x="5" y="3" width="3" height="2"/><rect x="9" y="3" width="3" height="2"/><rect x="1" y="6" width="3" height="2"/><rect x="5" y="6" width="3" height="2"/><rect x="9" y="6" width="3" height="2"/><rect x="1" y="9" width="3" height="2"/><rect x="5" y="9" width="3" height="2"/><rect x="9" y="9" width="3" height="2"/></g></svg>
<div class="t" style="left:120px;top:255px;font-size:12px;color:#1E1E1E;">dbo.mmessages</div>
<div style="left:84px;top:277px;width:9px;height:9px;border:1px solid #A0A0A0;background:#F4F4F4;"></div>
<div style="left:86px;top:281px;width:5px;height:1px;background:#2F4A8A;"></div>
<div style="left:88px;top:279px;width:1px;height:5px;background:#2F4A8A;"></div>
<svg style="left:101px;top:274px" width="13" height="12" viewBox="0 0 13 12"><rect x="0" y="0" width="13" height="12" fill="#424242"/><g fill="#fff"><rect x="1" y="3" width="3" height="2"/><rect x="5" y="3" width="3" height="2"/><rect x="9" y="3" width="3" height="2"/><rect x="1" y="6" width="3" height="2"/><rect x="5" y="6" width="3" height="2"/><rect x="9" y="6" width="3" height="2"/><rect x="1" y="9" width="3" height="2"/><rect x="5" y="9" width="3" height="2"/><rect x="9" y="9" width="3" height="2"/></g></svg>
<div class="t" style="left:120px;top:273px;font-size:12px;color:#1E1E1E;">dbo.news</div>
<div style="left:84px;top:295px;width:9px;height:9px;border:1px solid #A0A0A0;background:#F4F4F4;"></div>
<div style="left:86px;top:299px;width:5px;height:1px;background:#2F4A8A;"></div>
<div style="left:88px;top:297px;width:1px;height:5px;background:#2F4A8A;"></div>
<svg style="left:101px;top:292px" width="13" height="12" viewBox="0 0 13 12"><rect x="0" y="0" width="13" height="12" fill="#424242"/><g fill="#fff"><rect x="1" y="3" width="3" height="2"/><rect x="5" y="3" width="3" height="2"/><rect x="9" y="3" width="3" height="2"/><rect x="1" y="6" width="3" height="2"/><rect x="5" y="6" width="3" height="2"/><rect x="9" y="6" width="3" height="2"/><rect x="1" y="9" width="3" height="2"/><rect x="5" y="9" width="3" height="2"/><rect x="9" y="9" width="3" height="2"/></g></svg>
<div class="t" style="left:120px;top:291px;font-size:12px;color:#1E1E1E;">dbo.objects</div>
<div style="left:84px;top:313px;width:9px;height:9px;border:1px solid #A0A0A0;background:#F4F4F4;"></div>
<div style="left:86px;top:317px;width:5px;height:1px;background:#2F4A8A;"></div>
<div style="left:88px;top:315px;width:1px;height:5px;background:#2F4A8A;"></div>
<svg style="left:101px;top:310px" width="13" height="12" viewBox="0 0 13 12"><rect x="0" y="0" width="13" height="12" fill="#424242"/><g fill="#fff"><rect x="1" y="3" width="3" height="2"/><rect x="5" y="3" width="3" height="2"/><rect x="9" y="3" width="3" height="2"/><rect x="1" y="6" width="3" height="2"/><rect x="5" y="6" width="3" height="2"/><rect x="9" y="6" width="3" height="2"/><rect x="1" y="9" width="3" height="2"/><rect x="5" y="9" width="3" height="2"/><rect x="9" y="9" width="3" height="2"/></g></svg>
<div class="t" style="left:120px;top:309px;font-size:12px;color:#1E1E1E;">dbo.ObjState</div>
<div style="left:84px;top:331px;width:9px;height:9px;border:1px solid #A0A0A0;background:#F4F4F4;"></div>
<div style="left:86px;top:335px;width:5px;height:1px;background:#2F4A8A;"></div>
<div style="left:88px;top:333px;width:1px;height:5px;background:#2F4A8A;"></div>
<svg style="left:101px;top:328px" width="13" height="12" viewBox="0 0 13 12"><rect x="0" y="0" width="13" height="12" fill="#424242"/><g fill="#fff"><rect x="1" y="3" width="3" height="2"/><rect x="5" y="3" width="3" height="2"/><rect x="9" y="3" width="3" height="2"/><rect x="1" y="6" width="3" height="2"/><rect x="5" y="6" width="3" height="2"/><rect x="9" y="6" width="3" height="2"/><rect x="1" y="9" width="3" height="2"/><rect x="5" y="9" width="3" height="2"/><rect x="9" y="9" width="3" height="2"/></g></svg>
<div class="t" style="left:120px;top:327px;font-size:12px;color:#1E1E1E;">dbo.ObjStateChg</div>
<div style="left:84px;top:349px;width:9px;height:9px;border:1px solid #A0A0A0;background:#F4F4F4;"></div>
<div style="left:86px;top:353px;width:5px;height:1px;background:#2F4A8A;"></div>
<div style="left:88px;top:351px;width:1px;height:5px;background:#2F4A8A;"></div>
<svg style="left:101px;top:346px" width="13" height="12" viewBox="0 0 13 12"><rect x="0" y="0" width="13" height="12" fill="#424242"/><g fill="#fff"><rect x="1" y="3" width="3" height="2"/><rect x="5" y="3" width="3" height="2"/><rect x="9" y="3" width="3" height="2"/><rect x="1" y="6" width="3" height="2"/><rect x="5" y="6" width="3" height="2"/><rect x="9" y="6" width="3" height="2"/><rect x="1" y="9" width="3" height="2"/><rect x="5" y="9" width="3" height="2"/><rect x="9" y="9" width="3" height="2"/></g></svg>
<div class="t" style="left:120px;top:345px;font-size:12px;color:#1E1E1E;">dbo.opr</div>
<div style="left:84px;top:367px;width:9px;height:9px;border:1px solid #A0A0A0;background:#F4F4F4;"></div>
<div style="left:86px;top:371px;width:5px;height:1px;background:#2F4A8A;"></div>
<div style="left:88px;top:369px;width:1px;height:5px;background:#2F4A8A;"></div>
<svg style="left:101px;top:364px" width="13" height="12" viewBox="0 0 13 12"><rect x="0" y="0" width="13" height="12" fill="#424242"/><g fill="#fff"><rect x="1" y="3" width="3" height="2"/><rect x="5" y="3" width="3" height="2"/><rect x="9" y="3" width="3" height="2"/><rect x="1" y="6" width="3" height="2"/><rect x="5" y="6" width="3" height="2"/><rect x="9" y="6" width="3" height="2"/><rect x="1" y="9" width="3" height="2"/><rect x="5" y="9" width="3" height="2"/><rect x="9" y="9" width="3" height="2"/></g></svg>
<div class="t" style="left:120px;top:363px;font-size:12px;color:#1E1E1E;">dbo.question</div>
<div style="left:84px;top:385px;width:9px;height:9px;border:1px solid #A0A0A0;background:#F4F4F4;"></div>
<div style="left:86px;top:389px;width:5px;height:1px;background:#2F4A8A;"></div>
<div style="left:88px;top:387px;width:1px;height:5px;background:#2F4A8A;"></div>
<svg style="left:101px;top:382px" width="13" height="12" viewBox="0 0 13 12"><rect x="0" y="0" width="13" height="12" fill="#424242"/><g fill="#fff"><rect x="1" y="3" width="3" height="2"/><rect x="5" y="3" width="3" height="2"/><rect x="9" y="3" width="3" height="2"/><rect x="1" y="6" width="3" height="2"/><rect x="5" y="6" width="3" height="2"/><rect x="9" y="6" width="3" height="2"/><rect x="1" y="9" width="3" height="2"/><rect x="5" y="9" width="3" height="2"/><rect x="9" y="9" width="3" height="2"/></g></svg>
<div class="t" style="left:120px;top:381px;font-size:12px;color:#1E1E1E;">dbo.registry_action</div>
<div style="left:84px;top:403px;width:9px;height:9px;border:1px solid #A0A0A0;background:#F4F4F4;"></div>
<div style="left:86px;top:407px;width:5px;height:1px;background:#2F4A8A;"></div>
<div style="left:88px;top:405px;width:1px;height:5px;background:#2F4A8A;"></div>
<svg style="left:101px;top:400px" width="13" height="12" viewBox="0 0 13 12"><rect x="0" y="0" width="13" height="12" fill="#424242"/><g fill="#fff"><rect x="1" y="3" width="3" height="2"/><rect x="5" y="3" width="3" height="2"/><rect x="9" y="3" width="3" height="2"/><rect x="1" y="6" width="3" height="2"/><rect x="5" y="6" width="3" height="2"/><rect x="9" y="6" width="3" height="2"/><rect x="1" y="9" width="3" height="2"/><rect x="5" y="9" width="3" height="2"/><rect x="9" y="9" width="3" height="2"/></g></svg>
<div class="t" style="left:120px;top:399px;font-size:12px;color:#1E1E1E;">dbo.registry_contract</div>
<div style="left:84px;top:421px;width:9px;height:9px;border:1px solid #A0A0A0;background:#F4F4F4;"></div>
<div style="left:86px;top:425px;width:5px;height:1px;background:#2F4A8A;"></div>
<div style="left:88px;top:423px;width:1px;height:5px;background:#2F4A8A;"></div>
<svg style="left:101px;top:418px" width="13" height="12" viewBox="0 0 13 12"><rect x="0" y="0" width="13" height="12" fill="#424242"/><g fill="#fff"><rect x="1" y="3" width="3" height="2"/><rect x="5" y="3" width="3" height="2"/><rect x="9" y="3" width="3" height="2"/><rect x="1" y="6" width="3" height="2"/><rect x="5" y="6" width="3" height="2"/><rect x="9" y="6" width="3" height="2"/><rect x="1" y="9" width="3" height="2"/><rect x="5" y="9" width="3" height="2"/><rect x="9" y="9" width="3" height="2"/></g></svg>
<div class="t" style="left:120px;top:417px;font-size:12px;color:#1E1E1E;">dbo.registry_item</div>
<div style="left:84px;top:439px;width:9px;height:9px;border:1px solid #A0A0A0;background:#F4F4F4;"></div>
<div style="left:86px;top:443px;width:5px;height:1px;background:#2F4A8A;"></div>
<div style="left:88px;top:441px;width:1px;height:5px;background:#2F4A8A;"></div>
<svg style="left:101px;top:436px" width="13" height="12" viewBox="0 0 13 12"><rect x="0" y="0" width="13" height="12" fill="#424242"/><g fill="#fff"><rect x="1" y="3" width="3" height="2"/><rect x="5" y="3" width="3" height="2"/><rect x="9" y="3" width="3" height="2"/><rect x="1" y="6" width="3" height="2"/><rect x="5" y="6" width="3" height="2"/><rect x="9" y="6" width="3" height="2"/><rect x="1" y="9" width="3" height="2"/><rect x="5" y="9" width="3" height="2"/><rect x="9" y="9" width="3" height="2"/></g></svg>
<div class="t" style="left:120px;top:435px;font-size:12px;color:#1E1E1E;">dbo.registry_object</div>
<div style="left:84px;top:457px;width:9px;height:9px;border:1px solid #A0A0A0;background:#F4F4F4;"></div>
<div style="left:86px;top:461px;width:5px;height:1px;background:#2F4A8A;"></div>
<div style="left:88px;top:459px;width:1px;height:5px;background:#2F4A8A;"></div>
<svg style="left:101px;top:454px" width="13" height="12" viewBox="0 0 13 12"><rect x="0" y="0" width="13" height="12" fill="#424242"/><g fill="#fff"><rect x="1" y="3" width="3" height="2"/><rect x="5" y="3" width="3" height="2"/><rect x="9" y="3" width="3" height="2"/><rect x="1" y="6" width="3" height="2"/><rect x="5" y="6" width="3" height="2"/><rect x="9" y="6" width="3" height="2"/><rect x="1" y="9" width="3" height="2"/><rect x="5" y="9" width="3" height="2"/><rect x="9" y="9" width="3" height="2"/></g></svg>
<div class="t" style="left:120px;top:453px;font-size:12px;color:#1E1E1E;">dbo.registry_request</div>
<div style="left:84px;top:475px;width:9px;height:9px;border:1px solid #A0A0A0;background:#F4F4F4;"></div>
<div style="left:86px;top:479px;width:5px;height:1px;background:#2F4A8A;"></div>
<div style="left:88px;top:477px;width:1px;height:5px;background:#2F4A8A;"></div>
<svg style="left:101px;top:472px" width="13" height="12" viewBox="0 0 13 12"><rect x="0" y="0" width="13" height="12" fill="#424242"/><g fill="#fff"><rect x="1" y="3" width="3" height="2"/><rect x="5" y="3" width="3" height="2"/><rect x="9" y="3" width="3" height="2"/><rect x="1" y="6" width="3" height="2"/><rect x="5" y="6" width="3" height="2"/><rect x="9" y="6" width="3" height="2"/><rect x="1" y="9" width="3" height="2"/><rect x="5" y="9" width="3" height="2"/><rect x="9" y="9" width="3" height="2"/></g></svg>
<div class="t" style="left:120px;top:471px;font-size:12px;color:#1E1E1E;">dbo.rooms</div>
<div style="left:84px;top:493px;width:9px;height:9px;border:1px solid #A0A0A0;background:#F4F4F4;"></div>
<div style="left:86px;top:497px;width:5px;height:1px;background:#2F4A8A;"></div>
<div style="left:88px;top:495px;width:1px;height:5px;background:#2F4A8A;"></div>
<svg style="left:101px;top:490px" width="13" height="12" viewBox="0 0 13 12"><rect x="0" y="0" width="13" height="12" fill="#424242"/><g fill="#fff"><rect x="1" y="3" width="3" height="2"/><rect x="5" y="3" width="3" height="2"/><rect x="9" y="3" width="3" height="2"/><rect x="1" y="6" width="3" height="2"/><rect x="5" y="6" width="3" height="2"/><rect x="9" y="6" width="3" height="2"/><rect x="1" y="9" width="3" height="2"/><rect x="5" y="9" width="3" height="2"/><rect x="9" y="9" width="3" height="2"/></g></svg>
<div class="t" style="left:120px;top:489px;font-size:12px;color:#1E1E1E;">dbo.stat_bid</div>
<div style="left:84px;top:511px;width:9px;height:9px;border:1px solid #A0A0A0;background:#F4F4F4;"></div>
<div style="left:86px;top:515px;width:5px;height:1px;background:#2F4A8A;"></div>
<div style="left:88px;top:513px;width:1px;height:5px;background:#2F4A8A;"></div>
<svg style="left:101px;top:508px" width="13" height="12" viewBox="0 0 13 12"><rect x="0" y="0" width="13" height="12" fill="#424242"/><g fill="#fff"><rect x="1" y="3" width="3" height="2"/><rect x="5" y="3" width="3" height="2"/><rect x="9" y="3" width="3" height="2"/><rect x="1" y="6" width="3" height="2"/><rect x="5" y="6" width="3" height="2"/><rect x="9" y="6" width="3" height="2"/><rect x="1" y="9" width="3" height="2"/><rect x="5" y="9" width="3" height="2"/><rect x="9" y="9" width="3" height="2"/></g></svg>
<div class="t" style="left:120px;top:507px;font-size:12px;color:#1E1E1E;">dbo.tasks</div>
<div style="left:84px;top:529px;width:9px;height:9px;border:1px solid #A0A0A0;background:#F4F4F4;"></div>
<div style="left:86px;top:533px;width:5px;height:1px;background:#2F4A8A;"></div>
<div style="left:88px;top:531px;width:1px;height:5px;background:#2F4A8A;"></div>
<svg style="left:101px;top:526px" width="13" height="12" viewBox="0 0 13 12"><rect x="0" y="0" width="13" height="12" fill="#424242"/><g fill="#fff"><rect x="1" y="3" width="3" height="2"/><rect x="5" y="3" width="3" height="2"/><rect x="9" y="3" width="3" height="2"/><rect x="1" y="6" width="3" height="2"/><rect x="5" y="6" width="3" height="2"/><rect x="9" y="6" width="3" height="2"/><rect x="1" y="9" width="3" height="2"/><rect x="5" y="9" width="3" height="2"/><rect x="9" y="9" width="3" height="2"/></g></svg>
<div class="t" style="left:120px;top:525px;font-size:12px;color:#1E1E1E;">dbo.tender</div>
<div style="left:84px;top:547px;width:9px;height:9px;border:1px solid #A0A0A0;background:#F4F4F4;"></div>
<div style="left:86px;top:551px;width:5px;height:1px;background:#2F4A8A;"></div>
<div style="left:88px;top:549px;width:1px;height:5px;background:#2F4A8A;"></div>
<svg style="left:101px;top:544px" width="13" height="12" viewBox="0 0 13 12"><rect x="0" y="0" width="13" height="12" fill="#424242"/><g fill="#fff"><rect x="1" y="3" width="3" height="2"/><rect x="5" y="3" width="3" height="2"/><rect x="9" y="3" width="3" height="2"/><rect x="1" y="6" width="3" height="2"/><rect x="5" y="6" width="3" height="2"/><rect x="9" y="6" width="3" height="2"/><rect x="1" y="9" width="3" height="2"/><rect x="5" y="9" width="3" height="2"/><rect x="9" y="9" width="3" height="2"/></g></svg>
<div class="t" style="left:120px;top:543px;font-size:12px;color:#1E1E1E;">dbo.tender_docs</div>
<div style="left:84px;top:565px;width:9px;height:9px;border:1px solid #A0A0A0;background:#F4F4F4;"></div>
<div style="left:86px;top:569px;width:5px;height:1px;background:#2F4A8A;"></div>
<div style="left:88px;top:567px;width:1px;height:5px;background:#2F4A8A;"></div>
<svg style="left:101px;top:562px" width="13" height="12" viewBox="0 0 13 12"><rect x="0" y="0" width="13" height="12" fill="#424242"/><g fill="#fff"><rect x="1" y="3" width="3" height="2"/><rect x="5" y="3" width="3" height="2"/><rect x="9" y="3" width="3" height="2"/><rect x="1" y="6" width="3" height="2"/><rect x="5" y="6" width="3" height="2"/><rect x="9" y="6" width="3" height="2"/><rect x="1" y="9" width="3" height="2"/><rect x="5" y="9" width="3" height="2"/><rect x="9" y="9" width="3" height="2"/></g></svg>
<div class="t" style="left:120px;top:561px;font-size:12px;color:#1E1E1E;">dbo.tender_handle</div>
<div style="left:84px;top:583px;width:9px;height:9px;border:1px solid #A0A0A0;background:#F4F4F4;"></div>
<div style="left:86px;top:587px;width:5px;height:1px;background:#2F4A8A;"></div>
<div style="left:88px;top:585px;width:1px;height:5px;background:#2F4A8A;"></div>
<svg style="left:101px;top:580px" width="13" height="12" viewBox="0 0 13 12"><rect x="0" y="0" width="13" height="12" fill="#424242"/><g fill="#fff"><rect x="1" y="3" width="3" height="2"/><rect x="5" y="3" width="3" height="2"/><rect x="9" y="3" width="3" height="2"/><rect x="1" y="6" width="3" height="2"/><rect x="5" y="6" width="3" height="2"/><rect x="9" y="6" width="3" height="2"/><rect x="1" y="9" width="3" height="2"/><rect x="5" y="9" width="3" height="2"/><rect x="9" y="9" width="3" height="2"/></g></svg>
<div class="t" style="left:120px;top:579px;font-size:12px;color:#1E1E1E;">dbo.TenderInList</div>
<div style="left:84px;top:601px;width:9px;height:9px;border:1px solid #A0A0A0;background:#F4F4F4;"></div>
<div style="left:86px;top:605px;width:5px;height:1px;background:#2F4A8A;"></div>
<div style="left:88px;top:603px;width:1px;height:5px;background:#2F4A8A;"></div>
<svg style="left:101px;top:598px" width="13" height="12" viewBox="0 0 13 12"><rect x="0" y="0" width="13" height="12" fill="#424242"/><g fill="#fff"><rect x="1" y="3" width="3" height="2"/><rect x="5" y="3" width="3" height="2"/><rect x="9" y="3" width="3" height="2"/><rect x="1" y="6" width="3" height="2"/><rect x="5" y="6" width="3" height="2"/><rect x="9" y="6" width="3" height="2"/><rect x="1" y="9" width="3" height="2"/><rect x="5" y="9" width="3" height="2"/><rect x="9" y="9" width="3" height="2"/></g></svg>
<div class="t" style="left:120px;top:597px;font-size:12px;color:#1E1E1E;">dbo.TenderInPopularList</div>
<div style="left:84px;top:619px;width:9px;height:9px;border:1px solid #A0A0A0;background:#F4F4F4;"></div>
<div style="left:86px;top:623px;width:5px;height:1px;background:#2F4A8A;"></div>
<div style="left:88px;top:621px;width:1px;height:5px;background:#2F4A8A;"></div>
<svg style="left:101px;top:616px" width="13" height="12" viewBox="0 0 13 12"><rect x="0" y="0" width="13" height="12" fill="#424242"/><g fill="#fff"><rect x="1" y="3" width="3" height="2"/><rect x="5" y="3" width="3" height="2"/><rect x="9" y="3" width="3" height="2"/><rect x="1" y="6" width="3" height="2"/><rect x="5" y="6" width="3" height="2"/><rect x="9" y="6" width="3" height="2"/><rect x="1" y="9" width="3" height="2"/><rect x="5" y="9" width="3" height="2"/><rect x="9" y="9" width="3" height="2"/></g></svg>
<div class="t" style="left:120px;top:615px;font-size:12px;color:#1E1E1E;">dbo.TenderPull</div>
<div style="left:84px;top:637px;width:9px;height:9px;border:1px solid #A0A0A0;background:#F4F4F4;"></div>
<div style="left:86px;top:641px;width:5px;height:1px;background:#2F4A8A;"></div>
<div style="left:88px;top:639px;width:1px;height:5px;background:#2F4A8A;"></div>
<svg style="left:101px;top:634px" width="13" height="12" viewBox="0 0 13 12"><rect x="0" y="0" width="13" height="12" fill="#424242"/><g fill="#fff"><rect x="1" y="3" width="3" height="2"/><rect x="5" y="3" width="3" height="2"/><rect x="9" y="3" width="3" height="2"/><rect x="1" y="6" width="3" height="2"/><rect x="5" y="6" width="3" height="2"/><rect x="9" y="6" width="3" height="2"/><rect x="1" y="9" width="3" height="2"/><rect x="5" y="9" width="3" height="2"/><rect x="9" y="9" width="3" height="2"/></g></svg>
<div class="t" style="left:120px;top:633px;font-size:12px;color:#1E1E1E;">dbo.TenderPull_Item</div>
<div style="left:84px;top:655px;width:9px;height:9px;border:1px solid #A0A0A0;background:#F4F4F4;"></div>
<div style="left:86px;top:659px;width:5px;height:1px;background:#2F4A8A;"></div>
<div style="left:88px;top:657px;width:1px;height:5px;background:#2F4A8A;"></div>
<svg style="left:101px;top:652px" width="13" height="12" viewBox="0 0 13 12"><rect x="0" y="0" width="13" height="12" fill="#424242"/><g fill="#fff"><rect x="1" y="3" width="3" height="2"/><rect x="5" y="3" width="3" height="2"/><rect x="9" y="3" width="3" height="2"/><rect x="1" y="6" width="3" height="2"/><rect x="5" y="6" width="3" height="2"/><rect x="9" y="6" width="3" height="2"/><rect x="1" y="9" width="3" height="2"/><rect x="5" y="9" width="3" height="2"/><rect x="9" y="9" width="3" height="2"/></g></svg>
<div class="t" style="left:120px;top:651px;font-size:12px;color:#1E1E1E;">dbo.timber_items</div>
<div style="left:84px;top:673px;width:9px;height:9px;border:1px solid #A0A0A0;background:#F4F4F4;"></div>
<div style="left:86px;top:677px;width:5px;height:1px;background:#2F4A8A;"></div>
<div style="left:88px;top:675px;width:1px;height:5px;background:#2F4A8A;"></div>
<svg style="left:101px;top:670px" width="13" height="12" viewBox="0 0 13 12"><rect x="0" y="0" width="13" height="12" fill="#424242"/><g fill="#fff"><rect x="1" y="3" width="3" height="2"/><rect x="5" y="3" width="3" height="2"/><rect x="9" y="3" width="3" height="2"/><rect x="1" y="6" width="3" height="2"/><rect x="5" y="6" width="3" height="2"/><rect x="9" y="6" width="3" height="2"/><rect x="1" y="9" width="3" height="2"/><rect x="5" y="9" width="3" height="2"/><rect x="9" y="9" width="3" height="2"/></g></svg>
<div class="t" style="left:120px;top:669px;font-size:12px;color:#1E1E1E;">dbo.user_filter</div>
<div style="left:84px;top:691px;width:9px;height:9px;border:1px solid #A0A0A0;background:#F4F4F4;"></div>
<div style="left:86px;top:695px;width:5px;height:1px;background:#2F4A8A;"></div>
<div style="left:88px;top:693px;width:1px;height:5px;background:#2F4A8A;"></div>
<svg style="left:101px;top:688px" width="13" height="12" viewBox="0 0 13 12"><rect x="0" y="0" width="13" height="12" fill="#424242"/><g fill="#fff"><rect x="1" y="3" width="3" height="2"/><rect x="5" y="3" width="3" height="2"/><rect x="9" y="3" width="3" height="2"/><rect x="1" y="6" width="3" height="2"/><rect x="5" y="6" width="3" height="2"/><rect x="9" y="6" width="3" height="2"/><rect x="1" y="9" width="3" height="2"/><rect x="5" y="9" width="3" height="2"/><rect x="9" y="9" width="3" height="2"/></g></svg>
<div class="t" style="left:120px;top:687px;font-size:12px;color:#1E1E1E;">dbo.user_mail_check</div>
<div style="left:84px;top:709px;width:9px;height:9px;border:1px solid #A0A0A0;background:#F4F4F4;"></div>
<div style="left:86px;top:713px;width:5px;height:1px;background:#2F4A8A;"></div>
<div style="left:88px;top:711px;width:1px;height:5px;background:#2F4A8A;"></div>
<svg style="left:101px;top:706px" width="13" height="12" viewBox="0 0 13 12"><rect x="0" y="0" width="13" height="12" fill="#424242"/><g fill="#fff"><rect x="1" y="3" width="3" height="2"/><rect x="5" y="3" width="3" height="2"/><rect x="9" y="3" width="3" height="2"/><rect x="1" y="6" width="3" height="2"/><rect x="5" y="6" width="3" height="2"/><rect x="9" y="6" width="3" height="2"/><rect x="1" y="9" width="3" height="2"/><rect x="5" y="9" width="3" height="2"/><rect x="9" y="9" width="3" height="2"/></g></svg>
<div class="t" style="left:120px;top:705px;font-size:12px;color:#1E1E1E;">dbo.user_notify</div>
<div style="left:84px;top:727px;width:9px;height:9px;border:1px solid #A0A0A0;background:#F4F4F4;"></div>
<div style="left:86px;top:731px;width:5px;height:1px;background:#2F4A8A;"></div>
<div style="left:88px;top:729px;width:1px;height:5px;background:#2F4A8A;"></div>
<svg style="left:101px;top:724px" width="13" height="12" viewBox="0 0 13 12"><rect x="0" y="0" width="13" height="12" fill="#424242"/><g fill="#fff"><rect x="1" y="3" width="3" height="2"/><rect x="5" y="3" width="3" height="2"/><rect x="9" y="3" width="3" height="2"/><rect x="1" y="6" width="3" height="2"/><rect x="5" y="6" width="3" height="2"/><rect x="9" y="6" width="3" height="2"/><rect x="1" y="9" width="3" height="2"/><rect x="5" y="9" width="3" height="2"/><rect x="9" y="9" width="3" height="2"/></g></svg>
<div class="t" style="left:120px;top:723px;font-size:12px;color:#1E1E1E;">dbo.user_notify_tender</div>
<div style="left:84px;top:745px;width:9px;height:9px;border:1px solid #A0A0A0;background:#F4F4F4;"></div>
<div style="left:86px;top:749px;width:5px;height:1px;background:#2F4A8A;"></div>
<div style="left:88px;top:747px;width:1px;height:5px;background:#2F4A8A;"></div>
<svg style="left:101px;top:742px" width="13" height="12" viewBox="0 0 13 12"><rect x="0" y="0" width="13" height="12" fill="#424242"/><g fill="#fff"><rect x="1" y="3" width="3" height="2"/><rect x="5" y="3" width="3" height="2"/><rect x="9" y="3" width="3" height="2"/><rect x="1" y="6" width="3" height="2"/><rect x="5" y="6" width="3" height="2"/><rect x="9" y="6" width="3" height="2"/><rect x="1" y="9" width="3" height="2"/><rect x="5" y="9" width="3" height="2"/><rect x="9" y="9" width="3" height="2"/></g></svg>
<div class="t" style="left:120px;top:741px;font-size:12px;color:#1E1E1E;">dbo.user_params</div>
<div style="left:84px;top:763px;width:9px;height:9px;border:1px solid #A0A0A0;background:#F4F4F4;"></div>
<div style="left:86px;top:767px;width:5px;height:1px;background:#2F4A8A;"></div>
<div style="left:88px;top:765px;width:1px;height:5px;background:#2F4A8A;"></div>
<svg style="left:101px;top:760px" width="13" height="12" viewBox="0 0 13 12"><rect x="0" y="0" width="13" height="12" fill="#424242"/><g fill="#fff"><rect x="1" y="3" width="3" height="2"/><rect x="5" y="3" width="3" height="2"/><rect x="9" y="3" width="3" height="2"/><rect x="1" y="6" width="3" height="2"/><rect x="5" y="6" width="3" height="2"/><rect x="9" y="6" width="3" height="2"/><rect x="1" y="9" width="3" height="2"/><rect x="5" y="9" width="3" height="2"/><rect x="9" y="9" width="3" height="2"/></g></svg>
<div class="t" style="left:120px;top:759px;font-size:12px;color:#1E1E1E;">dbo.user_sys</div>
<div style="left:84px;top:781px;width:9px;height:9px;border:1px solid #A0A0A0;background:#F4F4F4;"></div>
<div style="left:86px;top:785px;width:5px;height:1px;background:#2F4A8A;"></div>
<div style="left:88px;top:783px;width:1px;height:5px;background:#2F4A8A;"></div>
<svg style="left:101px;top:778px" width="13" height="12" viewBox="0 0 13 12"><rect x="0" y="0" width="13" height="12" fill="#424242"/><g fill="#fff"><rect x="1" y="3" width="3" height="2"/><rect x="5" y="3" width="3" height="2"/><rect x="9" y="3" width="3" height="2"/><rect x="1" y="6" width="3" height="2"/><rect x="5" y="6" width="3" height="2"/><rect x="9" y="6" width="3" height="2"/><rect x="1" y="9" width="3" height="2"/><rect x="5" y="9" width="3" height="2"/><rect x="9" y="9" width="3" height="2"/></g></svg>
<div class="t" style="left:120px;top:777px;font-size:12px;color:#1E1E1E;">dbo.users</div>
<div style="left:84px;top:799px;width:9px;height:9px;border:1px solid #A0A0A0;background:#F4F4F4;"></div>
<div style="left:86px;top:803px;width:5px;height:1px;background:#2F4A8A;"></div>
<div style="left:88px;top:801px;width:1px;height:5px;background:#2F4A8A;"></div>
<svg style="left:101px;top:796px" width="13" height="12" viewBox="0 0 13 12"><rect x="0" y="0" width="13" height="12" fill="#424242"/><g fill="#fff"><rect x="1" y="3" width="3" height="2"/><rect x="5" y="3" width="3" height="2"/><rect x="9" y="3" width="3" height="2"/><rect x="1" y="6" width="3" height="2"/><rect x="5" y="6" width="3" height="2"/><rect x="9" y="6" width="3" height="2"/><rect x="1" y="9" width="3" height="2"/><rect x="5" y="9" width="3" height="2"/><rect x="9" y="9" width="3" height="2"/></g></svg>
<div class="t" style="left:120px;top:795px;font-size:12px;color:#1E1E1E;">dbo.wait_payment_doc</div>
<div style="left:84px;top:817px;width:9px;height:9px;border:1px solid #A0A0A0;background:#F4F4F4;"></div>
<div style="left:86px;top:821px;width:5px;height:1px;background:#2F4A8A;"></div>
<div style="left:88px;top:819px;width:1px;height:5px;background:#2F4A8A;"></div>
<svg style="left:101px;top:814px" width="13" height="12" viewBox="0 0 13 12"><rect x="0" y="0" width="13" height="12" fill="#424242"/><g fill="#fff"><rect x="1" y="3" width="3" height="2"/><rect x="5" y="3" width="3" height="2"/><rect x="9" y="3" width="3" height="2"/><rect x="1" y="6" width="3" height="2"/><rect x="5" y="6" width="3" height="2"/><rect x="9" y="6" width="3" height="2"/><rect x="1" y="9" width="3" height="2"/><rect x="5" y="9" width="3" height="2"/><rect x="9" y="9" width="3" height="2"/></g></svg>
<div class="t" style="left:120px;top:813px;font-size:12px;color:#1E1E1E;">dbo.web_ses</div>
<div style="left:86px;top:832px;width:9px;height:2px;background:#DCB67A;"></div>
</div>
<div style="left:8px;top:992px;width:264px;height:16px;background:#E8E8EC;"></div>
<svg style="left:14px;top:995px;" width="5" height="9" viewBox="0 0 5 9"><path d="M5 0V9L0 4.5Z" fill="#868999"/></svg>
<svg style="left:243px;top:995px;" width="5" height="9" viewBox="0 0 5 9"><path d="M0 0V9L5 4.5Z" fill="#868999"/></svg>
<div style="left:26px;top:995px;width:150px;height:9px;background:#C2C3C9;"></div>
<div style="left:281px;top:109px;width:264px;height:21px;background:#FFF29D;"></div>
<div class="t" style="left:284px;top:113px;font-size:11.3px;">SQLQuery2.sql - 77...nvestUA_user (150))*</div>
<svg style="left:512px;top:116px;" width="9" height="8" viewBox="0 0 9 8"><path d="M0 3.5H4M3.5 0V7M4 1.5H8.5V5.5H4" stroke="#6E6040" stroke-width="1.1" fill="none"/><rect x="7.5" y="1" width="1.5" height="5" fill="#6E6040"/></svg>
<svg style="left:530px;top:115px;" width="10" height="8" viewBox="0 0 10 8"><path d="M0.5 0.5L9.5 7.5M9.5 0.5L0.5 7.5" stroke="#6E6040" stroke-width="1.3"/></svg>
<div style="left:545px;top:109px;width:260px;height:21px;background:#364E6F;"></div>
<div class="t" style="left:549px;top:113px;font-size:11.3px;color:#FFFFFF;">SQLQuery1.sql - 77...nvestUA_user (149))</div>
<svg style="left:1903px;top:118px;" width="8" height="4" viewBox="0 0 8 4"><path d="M0 0H8L4 4Z" fill="#E0E4EC"/></svg>
<div style="left:281px;top:128px;width:1632px;height:2px;background:#FFF29D;"></div>
<div style="left:281px;top:130px;width:1632px;height:299px;background:#FFFFFF;"></div>
<div style="left:281px;top:130px;width:19px;height:299px;background:#E6E7E8;"></div>
<div style="left:342px;top:130px;width:5px;height:299px;background:#FCE85A;"></div>
<div style="left:355px;top:130px;width:1px;height:299px;background:#A5A5A5;"></div>
<div style="left:1895px;top:130px;width:18px;height:299px;background:#E8E8EC;"></div>
<div style="left:1896px;top:130px;width:16px;height:17px;background:#F5F5F5;border:1px solid #A0A4AC;"></div>
<svg style="left:1899px;top:133px;" width="10" height="11" viewBox="0 0 10 11"><path d="M5 0V4M5 7V11M0 5H10M0 6.2H10M3 2L5 0L7 2M3 9L5 11L7 9" stroke="#1E1E1E" stroke-width="1" fill="none"/></svg>
<svg style="left:1900px;top:153px;" width="9" height="5" viewBox="0 0 9 5"><path d="M0 5H9L4.5 0Z" fill="#868999"/></svg>
<svg style="left:1900px;top:417px;" width="9" height="5" viewBox="0 0 9 5"><path d="M0 0H9L4.5 5Z" fill="#868999"/></svg>
<div style="left:1897px;top:161px;width:4px;height:233px;background:#FCE85A;"></div>
<div style="left:1901px;top:357px;width:8px;height:15px;background:#C2C3C9;"></div>
<div style="left:1896px;top:372px;width:17px;height:2px;background:#0000CD;"></div>
<div style="left:360px;top:390px;width:1534px;height:18px;border:2px solid #EAEAF2;"></div>
<div class="t m" style="left:301px;top:129.50px;width:38px;text-align:right;font-size:13.2px;line-height:18px;color:#2B91AF;">164</div>
<div class="t m" style="left:361px;top:129.50px;font-size:13.15px;line-height:18px;"><span style="color:#808080">  (</span></div>
<div class="t m" style="left:301px;top:148.23px;width:38px;text-align:right;font-size:13.2px;line-height:18px;color:#2B91AF;">165</div>
<div class="t m" style="left:361px;top:148.23px;font-size:13.15px;line-height:18px;"><span style="color:#000">    </span><span style="color:#0000FF">select</span></div>
<div class="t m" style="left:301px;top:166.96px;width:38px;text-align:right;font-size:13.2px;line-height:18px;color:#2B91AF;">166</div>
<div class="t m" style="left:361px;top:166.96px;font-size:13.15px;line-height:18px;"><span style="color:#000">      tt</span><span style="color:#808080">.*</span></div>
<div class="t m" style="left:301px;top:185.69px;width:38px;text-align:right;font-size:13.2px;line-height:18px;color:#2B91AF;">167</div>
<div class="t m" style="left:361px;top:185.69px;font-size:13.15px;line-height:18px;"><span style="color:#000">    </span><span style="color:#0000FF">from</span></div>
<div class="t m" style="left:301px;top:204.42px;width:38px;text-align:right;font-size:13.2px;line-height:18px;color:#2B91AF;">168</div>
<div class="t m" style="left:361px;top:204.42px;font-size:13.15px;line-height:18px;"><span style="color:#000">      tender tt</span></div>
<div class="t m" style="left:301px;top:223.15px;width:38px;text-align:right;font-size:13.2px;line-height:18px;color:#2B91AF;">169</div>
<div class="t m" style="left:361px;top:223.15px;font-size:13.15px;line-height:18px;"><span style="color:#000">      </span><span style="color:#808080">left JOIN</span><span style="color:#000"> member m </span><span style="color:#0000FF">on</span><span style="color:#000"> m</span><span style="color:#808080">.</span><span style="color:#000">id </span><span style="color:#808080">=</span><span style="color:#000"> tt</span><span style="color:#808080">.</span><span style="color:#000">id_member</span></div>
<div class="t m" style="left:301px;top:241.88px;width:38px;text-align:right;font-size:13.2px;line-height:18px;color:#2B91AF;">170</div>
<div class="t m" style="left:361px;top:241.88px;font-size:13.15px;line-height:18px;"><span style="color:#000">    </span><span style="color:#0000FF">where</span></div>
<div class="t m" style="left:301px;top:260.61px;width:38px;text-align:right;font-size:13.2px;line-height:18px;color:#2B91AF;">171</div>
<div class="t m" style="left:361px;top:260.61px;font-size:13.15px;line-height:18px;"><span style="color:#808080">      (</span></div>
<div class="t m" style="left:301px;top:279.34px;width:38px;text-align:right;font-size:13.2px;line-height:18px;color:#2B91AF;">172</div>
<div class="t m" style="left:361px;top:279.34px;font-size:13.15px;line-height:18px;"><span style="color:#000">        tt</span><span style="color:#808080">.</span><span style="color:#0000FF">status</span><span style="color:#808080"> not in (</span><span style="color:#FF0000">&#x27;created&#x27;</span><span style="color:#808080">, </span><span style="color:#FF0000">&#x27;deleted&#x27;</span><span style="color:#808080">)</span></div>
<div class="t m" style="left:301px;top:298.07px;width:38px;text-align:right;font-size:13.2px;line-height:18px;color:#2B91AF;">173</div>
<div class="t m" style="left:361px;top:298.07px;font-size:13.15px;line-height:18px;"><span style="color:#000">        </span><span style="color:#808080">or</span><span style="color:#000"> tt</span><span style="color:#808080">.</span><span style="color:#000">id_member </span><span style="color:#808080">=</span><span style="color:#000"> 137</span></div>
<div class="t m" style="left:301px;top:316.80px;width:38px;text-align:right;font-size:13.2px;line-height:18px;color:#2B91AF;">174</div>
<div class="t m" style="left:361px;top:316.80px;font-size:13.15px;line-height:18px;"><span style="color:#808080">      )</span></div>
<div class="t m" style="left:301px;top:335.53px;width:38px;text-align:right;font-size:13.2px;line-height:18px;color:#2B91AF;">175</div>
<div class="t m" style="left:361px;top:335.53px;font-size:13.15px;line-height:18px;"><span style="color:#000">      </span><span style="color:#808080">and</span><span style="color:#000"> tt</span><span style="color:#808080">.</span><span style="color:#0000FF">status</span><span style="color:#808080"> &lt;&gt; </span><span style="color:#FF0000">&#x27;draft&#x27;</span></div>
<div class="t m" style="left:301px;top:354.26px;width:38px;text-align:right;font-size:13.2px;line-height:18px;color:#2B91AF;">176</div>
<div class="t m" style="left:361px;top:354.26px;font-size:13.15px;line-height:18px;"><span style="color:#000">      </span><span style="color:#808080">and</span><span style="color:#000"> tt</span><span style="color:#808080">.</span><span style="color:#0000FF">status</span><span style="color:#808080"> &lt;&gt; </span><span style="color:#FF0000">&#x27;published&#x27;</span></div>
<div class="t m" style="left:301px;top:372.99px;width:38px;text-align:right;font-size:13.2px;line-height:18px;color:#2B91AF;">177</div>
<div class="t m" style="left:361px;top:372.99px;font-size:13.15px;line-height:18px;"><span style="color:#000">      </span><span style="color:#808080">and</span><span style="color:#000"> procurementMethodType </span><span style="color:#808080">&lt;&gt;</span><span style="color:#000"> </span><span style="color:#FF0000">&#x27;landLease&#x27;</span></div>
<div class="t m" style="left:301px;top:391.72px;width:38px;text-align:right;font-size:13.2px;line-height:18px;color:#2B91AF;">178</div>
<div class="t m" style="left:361px;top:391.72px;font-size:13.15px;line-height:18px;"><span style="color:#808080">  )</span><span style="color:#000"> </span><span style="color:#0000FF">AS</span><span style="color:#000"> t</span></div>
<div class="t m" style="left:301px;top:410.45px;width:38px;text-align:right;font-size:13.2px;line-height:18px;color:#2B91AF;">179</div>
<div class="t m" style="left:361px;top:410.45px;font-size:13.15px;line-height:18px;"><span style="color:#000">  </span><span style="color:#808080">left join</span><span style="color:#000"> dics s </span><span style="color:#0000FF">on</span><span style="color:#000"> s</span><span style="color:#808080">.</span><span style="color:#000">id_object </span><span style="color:#808080">=</span><span style="color:#000"> </span><span style="color:#FF0000">&#x27;tender&#x27;</span></div>
<div style="left:281px;top:429px;width:1632px;height:17px;background:#E8E8EC;"></div>
<div style="left:281px;top:430px;width:60px;height:16px;background:#FFFFFF;border:1px solid #9FB0D0;"></div>
<div class="t" style="left:284px;top:432px;font-size:11.5px;">110 %</div>
<svg style="left:333px;top:437px;" width="5" height="3" viewBox="0 0 5 3"><path d="M0 0H5L2.5 3Z" fill="#1E1E1E"/></svg>
<svg style="left:347px;top:434px;" width="5" height="9" viewBox="0 0 5 9"><path d="M5 0V9L0 4.5Z" fill="#C2C3C9"/></svg>
<svg style="left:1884px;top:434px;" width="5" height="9" viewBox="0 0 5 9"><path d="M0 0V9L5 4.5Z" fill="#C2C3C9"/></svg>
<div style="left:281px;top:446px;width:1632px;height:543px;background:#F0F0F0;"></div>
<div style="left:281px;top:450px;width:73px;height:24px;background:#FFFFFF;border:1px solid #D4D4D4;border-bottom:none;border-left:none;"></div>
<svg style="left:291px;top:454px;" width="13" height="12" viewBox="0 0 13 12"><rect x="0" y="0" width="13" height="12" fill="#424242"/><g fill="#fff"><rect x="1" y="3" width="3" height="2"/><rect x="5" y="3" width="3" height="2"/><rect x="9" y="3" width="3" height="2"/><rect x="1" y="6" width="3" height="2"/><rect x="5" y="6" width="3" height="2"/><rect x="9" y="6" width="3" height="2"/><rect x="1" y="9" width="3" height="2"/><rect x="5" y="9" width="3" height="2"/><rect x="9" y="9" width="3" height="2"/></g></svg>
<div class="t" style="left:311px;top:455px;font-size:11.3px;letter-spacing:-0.4px;">Results</div>
<div style="left:353px;top:452px;width:79px;height:21px;background:#F0F0F0;border:1px solid #D4D4D4;border-bottom:none;"></div>
<svg style="left:359px;top:455px;" width="14" height="14" viewBox="0 0 14 14"><rect x="7" y="0" width="7" height="11" fill="#424242"/><rect x="8.5" y="1.5" width="4" height="1.5" fill="#fff"/><rect x="10.5" y="8" width="1.5" height="1.5" fill="#fff"/><path d="M0.5 5.5h4l2 2v6h-6z" fill="#fff" stroke="#424242"/><path d="M2 9h3M2 11h3" stroke="#424242"/></svg>
<div class="t" style="left:380px;top:457px;font-size:11.3px;letter-spacing:-0.4px;">Messages</div>
<div style="left:285px;top:473px;width:1624px;height:510px;background:#FFFFFF;border:1px solid #A0A0A0;"></div>
<div style="left:286px;top:474px;width:1605px;height:492px;overflow:hidden;">
<div style="left:31px;top:0px;width:1px;height:492px;background:#F0F0F0;"></div>
<div style="left:240px;top:0px;width:1px;height:492px;background:#F0F0F0;"></div>
<div style="left:313px;top:0px;width:1px;height:492px;background:#F0F0F0;"></div>
<div style="left:471px;top:0px;width:1px;height:492px;background:#F0F0F0;"></div>
<div style="left:728px;top:0px;width:1px;height:492px;background:#F0F0F0;"></div>
<div style="left:883px;top:0px;width:1px;height:492px;background:#F0F0F0;"></div>
<div style="left:978px;top:0px;width:1px;height:492px;background:#F0F0F0;"></div>
<div style="left:1262px;top:0px;width:1px;height:492px;background:#F0F0F0;"></div>
<div style="left:1345px;top:0px;width:1px;height:492px;background:#F0F0F0;"></div>
<div style="left:1434px;top:0px;width:1px;height:492px;background:#F0F0F0;"></div>
<div style="left:1605px;top:0px;width:1px;height:492px;background:#F0F0F0;"></div>
<div style="left:0px;top:18px;width:1605px;height:1px;background:#F0F0F0;"></div>
<div style="left:0px;top:37px;width:1605px;height:1px;background:#F0F0F0;"></div>
<div style="left:0px;top:56px;width:1605px;height:1px;background:#F0F0F0;"></div>
<div style="left:0px;top:75px;width:1605px;height:1px;background:#F0F0F0;"></div>
<div style="left:0px;top:94px;width:1605px;height:1px;background:#F0F0F0;"></div>
<div style="left:0px;top:113px;width:1605px;height:1px;background:#F0F0F0;"></div>
<div style="left:0px;top:132px;width:1605px;height:1px;background:#F0F0F0;"></div>
<div style="left:0px;top:151px;width:1605px;height:1px;background:#F0F0F0;"></div>
<div style="left:0px;top:170px;width:1605px;height:1px;background:#F0F0F0;"></div>
<div style="left:0px;top:189px;width:1605px;height:1px;background:#F0F0F0;"></div>
<div style="left:0px;top:208px;width:1605px;height:1px;background:#F0F0F0;"></div>
<div style="left:0px;top:227px;width:1605px;height:1px;background:#F0F0F0;"></div>
<div style="left:0px;top:246px;width:1605px;height:1px;background:#F0F0F0;"></div>
<div style="left:0px;top:265px;width:1605px;height:1px;background:#F0F0F0;"></div>
<div style="left:0px;top:284px;width:1605px;height:1px;background:#F0F0F0;"></div>
<div style="left:0px;top:303px;width:1605px;height:1px;background:#F0F0F0;"></div>
<div style="left:0px;top:322px;width:1605px;height:1px;background:#F0F0F0;"></div>
<div style="left:0px;top:341px;width:1605px;height:1px;background:#F0F0F0;"></div>
<div style="left:0px;top:360px;width:1605px;height:1px;background:#F0F0F0;"></div>
<div style="left:0px;top:379px;width:1605px;height:1px;background:#F0F0F0;"></div>
<div style="left:0px;top:398px;width:1605px;height:1px;background:#F0F0F0;"></div>
<div style="left:0px;top:417px;width:1605px;height:1px;background:#F0F0F0;"></div>
<div style="left:0px;top:436px;width:1605px;height:1px;background:#F0F0F0;"></div>
<div style="left:0px;top:455px;width:1605px;height:1px;background:#F0F0F0;"></div>
<div style="left:0px;top:474px;width:1605px;height:1px;background:#F0F0F0;"></div>
<div style="left:0px;top:493px;width:1605px;height:1px;background:#F0F0F0;"></div>
<div style="left:32px;top:18px;width:209px;height:20px;background:#E6EAF0;border:1px dotted #000;"></div>
<div class="t" style="left:36px;top:2px;font-size:11.5px;letter-spacing:-0.4px;color:#000;-webkit-text-stroke:0.1px #000;">id</div>
<div class="t" style="left:245px;top:2px;font-size:11.5px;letter-spacing:-0.4px;color:#000;-webkit-text-stroke:0.1px #000;">cpv</div>
<div class="t" style="left:318px;top:2px;font-size:11.5px;letter-spacing:-0.4px;color:#000;-webkit-text-stroke:0.1px #000;">tenderID</div>
<div class="t" style="left:476px;top:2px;font-size:11.5px;letter-spacing:-0.4px;color:#000;-webkit-text-stroke:0.1px #000;">title</div>
<div class="t" style="left:733px;top:2px;font-size:11.5px;letter-spacing:-0.4px;color:#000;-webkit-text-stroke:0.1px #000;">StateText</div>
<div class="t" style="left:888px;top:2px;font-size:11.5px;letter-spacing:-0.4px;color:#000;-webkit-text-stroke:0.1px #000;">status</div>
<div class="t" style="left:983px;top:2px;font-size:11.5px;letter-spacing:-0.4px;color:#000;-webkit-text-stroke:0.1px #000;">description</div>
<div class="t" style="left:1267px;top:2px;font-size:11.5px;letter-spacing:-0.4px;color:#000;-webkit-text-stroke:0.1px #000;">value_amount</div>
<div class="t" style="left:1350px;top:2px;font-size:11.5px;letter-spacing:-0.4px;color:#000;-webkit-text-stroke:0.1px #000;">value_currency</div>
<div class="t" style="left:1439px;top:2px;font-size:11.5px;letter-spacing:-0.4px;color:#000;-webkit-text-stroke:0.1px #000;">tenderPeriod_startDate</div>
<div class="t" style="left:6px;top:21px;font-size:11.5px;letter-spacing:-0.4px;color:#000;-webkit-text-stroke:0.1px #000;">1</div>
<div class="t" style="left:39px;top:21px;font-size:11.5px;letter-spacing:-0.4px;color:#000;-webkit-text-stroke:0.1px #000;">1d36afb406d44592beddf282ac57df4e</div>
<div class="t" style="left:248px;top:21px;font-size:11.5px;letter-spacing:-0.4px;color:#000;-webkit-text-stroke:0.1px #000;">05110300-2</div>
<div class="t" style="left:321px;top:21px;font-size:11.5px;letter-spacing:-0.4px;color:#000;-webkit-text-stroke:0.1px #000;">UA-PS-2015-10-13-000011-1</div>
<div class="t" style="left:479px;top:21px;font-size:11.5px;letter-spacing:-0.4px;color:#000;-webkit-text-stroke:0.1px #000;">[ТЕСТУВАННЯ] 12р-2</div>
<div class="t" style="left:736px;top:21px;font-size:11.5px;letter-spacing:-0.4px;color:#000;-webkit-text-stroke:0.1px #000;">Період прийому пропозицій</div>
<div class="t" style="left:891px;top:21px;font-size:11.5px;letter-spacing:-0.4px;color:#000;-webkit-text-stroke:0.1px #000;">active.tendering</div>
<div class="t" style="left:986px;top:21px;font-size:11.5px;letter-spacing:-0.4px;color:#000;-webkit-text-stroke:0.1px #000;">Відомості про майно, що виставляється на торги, ...</div>
<div class="t" style="left:1270px;top:21px;font-size:11.5px;letter-spacing:-0.4px;color:#000;-webkit-text-stroke:0.1px #000;">10000</div>
<div class="t" style="left:1353px;top:21px;font-size:11.5px;letter-spacing:-0.4px;color:#000;-webkit-text-stroke:0.1px #000;">UAH</div>
<div class="t" style="left:1442px;top:21px;font-size:11.5px;letter-spacing:-0.4px;color:#000;-webkit-text-stroke:0.1px #000;">2021-10-13T17:43:44.113740+03:</div>
<div class="t" style="left:6px;top:40px;font-size:11.5px;letter-spacing:-0.4px;color:#000;-webkit-text-stroke:0.1px #000;">2</div>
<div class="t" style="left:39px;top:40px;font-size:11.5px;letter-spacing:-0.4px;color:#000;-webkit-text-stroke:0.1px #000;">4dd4ded48f344509a33c22ff015ed0d4</div>
<div class="t" style="left:248px;top:40px;font-size:11.5px;letter-spacing:-0.4px;color:#000;-webkit-text-stroke:0.1px #000;">03142500-3</div>
<div class="t" style="left:321px;top:40px;font-size:11.5px;letter-spacing:-0.4px;color:#000;-webkit-text-stroke:0.1px #000;">UA-PS-2015-10-13-000010-1</div>
<div class="t" style="left:479px;top:40px;font-size:11.5px;letter-spacing:-0.4px;color:#000;-webkit-text-stroke:0.1px #000;">[ТЕСТУВАННЯ] 1</div>
<div class="t" style="left:736px;top:40px;font-size:11.5px;letter-spacing:-0.4px;color:#000;-webkit-text-stroke:0.1px #000;">Період прийому пропозицій</div>
<div class="t" style="left:891px;top:40px;font-size:11.5px;letter-spacing:-0.4px;color:#000;-webkit-text-stroke:0.1px #000;">active.tendering</div>
<div class="t" style="left:986px;top:40px;font-size:11.5px;letter-spacing:-0.4px;color:#000;-webkit-text-stroke:0.1px #000;">1</div>
<div class="t" style="left:1270px;top:40px;font-size:11.5px;letter-spacing:-0.4px;color:#000;-webkit-text-stroke:0.1px #000;">1000</div>
<div class="t" style="left:1353px;top:40px;font-size:11.5px;letter-spacing:-0.4px;color:#000;-webkit-text-stroke:0.1px #000;">UAH</div>
<div class="t" style="left:1442px;top:40px;font-size:11.5px;letter-spacing:-0.4px;color:#000;-webkit-text-stroke:0.1px #000;">2021-10-13T16:48:33.054595+03:</div>
<div class="t" style="left:6px;top:59px;font-size:11.5px;letter-spacing:-0.4px;color:#000;-webkit-text-stroke:0.1px #000;">3</div>
<div class="t" style="left:39px;top:59px;font-size:11.5px;letter-spacing:-0.4px;color:#000;-webkit-text-stroke:0.1px #000;">615c0f1d3ea961178ca8210e</div>
<div class="t" style="left:248px;top:59px;font-size:11.5px;letter-spacing:-0.4px;color:#000;-webkit-text-stroke:0.1px #000;">03410000-7</div>
<div class="t" style="left:321px;top:59px;font-size:11.5px;letter-spacing:-0.4px;color:#000;-webkit-text-stroke:0.1px #000;">TIE001-UA-20151005-44993</div>
<div class="t" style="left:479px;top:59px;font-size:11.5px;letter-spacing:-0.4px;color:#000;-webkit-text-stroke:0.1px #000;">тест</div>
<div class="t" style="left:736px;top:59px;font-size:11.5px;letter-spacing:-0.4px;color:#000;-webkit-text-stroke:0.1px #000;">Прийняття заяв на участь</div>
<div class="t" style="left:891px;top:59px;font-size:11.5px;letter-spacing:-0.4px;color:#000;-webkit-text-stroke:0.1px #000;">active_tendering</div>
<div class="t" style="left:986px;top:59px;font-size:11.5px;letter-spacing:-0.4px;color:#000;-webkit-text-stroke:0.1px #000;">Назва аукціону</div>
<div class="t" style="left:1270px;top:59px;font-size:11.5px;letter-spacing:-0.4px;color:#000;-webkit-text-stroke:0.1px #000;">5800</div>
<div class="t" style="left:1353px;top:59px;font-size:11.5px;letter-spacing:-0.4px;color:#000;-webkit-text-stroke:0.1px #000;">UAH</div>
<div class="t" style="left:1442px;top:59px;font-size:11.5px;letter-spacing:-0.4px;color:#000;-webkit-text-stroke:0.1px #000;">2021-10-05T08:53:53.371000Z</div>
<div class="t" style="left:6px;top:78px;font-size:11.5px;letter-spacing:-0.4px;color:#000;-webkit-text-stroke:0.1px #000;">4</div>
<div class="t" style="left:39px;top:78px;font-size:11.5px;letter-spacing:-0.4px;color:#000;-webkit-text-stroke:0.1px #000;">61647d03fbe8214149a6150a</div>
<div class="t" style="left:248px;top:78px;font-size:11.5px;letter-spacing:-0.4px;color:#000;-webkit-text-stroke:0.1px #000;">06121000-6</div>
<div class="t" style="left:321px;top:78px;font-size:11.5px;letter-spacing:-0.4px;color:#000;-webkit-text-stroke:0.1px #000;">LRE001-UA-20151011-30321</div>
<div class="t" style="left:479px;top:78px;font-size:11.5px;letter-spacing:-0.4px;color:#000;-webkit-text-stroke:0.1px #000;">оьаоь</div>
<div class="t" style="left:736px;top:78px;font-size:11.5px;letter-spacing:-0.4px;color:#000;-webkit-text-stroke:0.1px #000;">Прийняття заяв на участь</div>
<div class="t" style="left:891px;top:78px;font-size:11.5px;letter-spacing:-0.4px;color:#000;-webkit-text-stroke:0.1px #000;">active_tendering</div>
<div class="t" style="left:986px;top:78px;font-size:11.5px;letter-spacing:-0.4px;color:#000;-webkit-text-stroke:0.1px #000;">робпрлба</div>
<div class="t" style="left:1270px;top:78px;font-size:11.5px;letter-spacing:-0.4px;color:#000;-webkit-text-stroke:0.1px #000;">34568</div>
<div class="t" style="left:1353px;top:78px;font-size:11.5px;letter-spacing:-0.4px;color:#000;-webkit-text-stroke:0.1px #000;">UAH</div>
<div class="t" style="left:1442px;top:78px;font-size:11.5px;letter-spacing:-0.4px;color:#000;-webkit-text-stroke:0.1px #000;">2021-10-13T15:00:00.000000Z</div>
<div class="t" style="left:6px;top:97px;font-size:11.5px;letter-spacing:-0.4px;color:#000;-webkit-text-stroke:0.1px #000;">5</div>
<div class="t" style="left:39px;top:97px;font-size:11.5px;letter-spacing:-0.4px;color:#000;-webkit-text-stroke:0.1px #000;">6166e6373e5f0d63a36ef009</div>
<div class="t" style="left:248px;top:97px;font-size:11.5px;letter-spacing:-0.4px;color:#000;-webkit-text-stroke:0.1px #000;">04100000-9</div>
<div class="t" style="left:321px;top:97px;font-size:11.5px;letter-spacing:-0.4px;color:#000;-webkit-text-stroke:0.1px #000;">BSE001-UA-20151013-99964</div>
<div class="t" style="left:479px;top:97px;font-size:11.5px;letter-spacing:-0.4px;color:#000;-webkit-text-stroke:0.1px #000;">Продаж майна basicSellEnglishFast</div>
<div class="t" style="left:736px;top:97px;font-size:11.5px;letter-spacing:-0.4px;color:#000;-webkit-text-stroke:0.1px #000;">Прийняття заяв на участь</div>
<div class="t" style="left:891px;top:97px;font-size:11.5px;letter-spacing:-0.4px;color:#000;-webkit-text-stroke:0.1px #000;">active_tendering</div>
<div class="t" style="left:986px;top:97px;font-size:11.5px;letter-spacing:-0.4px;color:#000;-webkit-text-stroke:0.1px #000;">jgbc</div>
<div class="t" style="left:1270px;top:97px;font-size:11.5px;letter-spacing:-0.4px;color:#000;-webkit-text-stroke:0.1px #000;">100</div>
<div class="t" style="left:1353px;top:97px;font-size:11.5px;letter-spacing:-0.4px;color:#000;-webkit-text-stroke:0.1px #000;">UAH</div>
<div class="t" style="left:1442px;top:97px;font-size:11.5px;letter-spacing:-0.4px;color:#000;-webkit-text-stroke:0.1px #000;">2021-10-13T13:59:19.259000Z</div>
<div class="t" style="left:6px;top:116px;font-size:11.5px;letter-spacing:-0.4px;color:#000;-webkit-text-stroke:0.1px #000;">6</div>
<div class="t" style="left:39px;top:116px;font-size:11.5px;letter-spacing:-0.4px;color:#000;-webkit-text-stroke:0.1px #000;">615b02ad902fc3f36f09cd8d</div>
<div class="t" style="left:248px;top:116px;font-size:11.5px;letter-spacing:-0.4px;color:#000;-webkit-text-stroke:0.1px #000;">34621100-7</div>
<div class="t" style="left:321px;top:116px;font-size:11.5px;letter-spacing:-0.4px;color:#000;-webkit-text-stroke:0.1px #000;">RCE001-UA-20151004-63715</div>
<div class="t" style="left:479px;top:116px;font-size:11.5px;letter-spacing:-0.4px;color:#000;-webkit-text-stroke:0.1px #000;">Lot number 1[test]</div>
<div class="t" style="left:736px;top:116px;font-size:11.5px;letter-spacing:-0.4px;color:#000;-webkit-text-stroke:0.1px #000;">Прийняття заяв на участь</div>
<div class="t" style="left:891px;top:116px;font-size:11.5px;letter-spacing:-0.4px;color:#000;-webkit-text-stroke:0.1px #000;">active_tendering</div>
<div class="t" style="left:986px;top:116px;font-size:11.5px;letter-spacing:-0.4px;color:#000;-webkit-text-stroke:0.1px #000;">lot #1 description</div>
<div class="t" style="left:1270px;top:116px;font-size:11.5px;letter-spacing:-0.4px;color:#000;-webkit-text-stroke:0.1px #000;">100</div>
<div class="t" style="left:1353px;top:116px;font-size:11.5px;letter-spacing:-0.4px;color:#000;-webkit-text-stroke:0.1px #000;">UAH</div>
<div class="t" style="left:1442px;top:116px;font-size:11.5px;letter-spacing:-0.4px;color:#000;-webkit-text-stroke:0.1px #000;">2021-10-04T13:33:33.750000Z</div>
<div class="t" style="left:6px;top:135px;font-size:11.5px;letter-spacing:-0.4px;color:#000;-webkit-text-stroke:0.1px #000;">7</div>
<div class="t" style="left:39px;top:135px;font-size:11.5px;letter-spacing:-0.4px;color:#000;-webkit-text-stroke:0.1px #000;">6166e78f3e5f0d63a36ef011</div>
<div class="t" style="left:248px;top:135px;font-size:11.5px;letter-spacing:-0.4px;color:#000;-webkit-text-stroke:0.1px #000;">04000000-8</div>
<div class="t" style="left:321px;top:135px;font-size:11.5px;letter-spacing:-0.4px;color:#000;-webkit-text-stroke:0.1px #000;">BSE001-UA-20151013-94907</div>
<div class="t" style="left:479px;top:135px;font-size:11.5px;letter-spacing:-0.4px;color:#000;-webkit-text-stroke:0.1px #000;">Auction test title 13.10.2015 17:04</div>
<div class="t" style="left:736px;top:135px;font-size:11.5px;letter-spacing:-0.4px;color:#000;-webkit-text-stroke:0.1px #000;">Прийняття заяв на участь</div>
<div class="t" style="left:891px;top:135px;font-size:11.5px;letter-spacing:-0.4px;color:#000;-webkit-text-stroke:0.1px #000;">active_tendering</div>
<div class="t" style="left:986px;top:135px;font-size:11.5px;letter-spacing:-0.4px;color:#000;-webkit-text-stroke:0.1px #000;">Auction description</div>
<div class="t" style="left:1270px;top:135px;font-size:11.5px;letter-spacing:-0.4px;color:#000;-webkit-text-stroke:0.1px #000;">111</div>
<div class="t" style="left:1353px;top:135px;font-size:11.5px;letter-spacing:-0.4px;color:#000;-webkit-text-stroke:0.1px #000;">UAH</div>
<div class="t" style="left:1442px;top:135px;font-size:11.5px;letter-spacing:-0.4px;color:#000;-webkit-text-stroke:0.1px #000;">2021-10-13T14:05:03.593000Z</div>
<div class="t" style="left:6px;top:154px;font-size:11.5px;letter-spacing:-0.4px;color:#000;-webkit-text-stroke:0.1px #000;">8</div>
<div class="t" style="left:39px;top:154px;font-size:11.5px;letter-spacing:-0.4px;color:#000;-webkit-text-stroke:0.1px #000;">6166e6cc3e5f0d63a36ef00f</div>
<div class="t" style="left:248px;top:154px;font-size:11.5px;letter-spacing:-0.4px;color:#000;-webkit-text-stroke:0.1px #000;">04000000-8</div>
<div class="t" style="left:321px;top:154px;font-size:11.5px;letter-spacing:-0.4px;color:#000;-webkit-text-stroke:0.1px #000;">BSE001-UA-20151013-20335</div>
<div class="t" style="left:479px;top:154px;font-size:11.5px;letter-spacing:-0.4px;color:#000;-webkit-text-stroke:0.1px #000;">Auction test title 13.10.2015 17:01</div>
<div class="t" style="left:736px;top:154px;font-size:11.5px;letter-spacing:-0.4px;color:#000;-webkit-text-stroke:0.1px #000;">Прийняття заяв на участь</div>
<div class="t" style="left:891px;top:154px;font-size:11.5px;letter-spacing:-0.4px;color:#000;-webkit-text-stroke:0.1px #000;">active_tendering</div>
<div class="t" style="left:986px;top:154px;font-size:11.5px;letter-spacing:-0.4px;color:#000;-webkit-text-stroke:0.1px #000;">Auction description</div>
<div class="t" style="left:1270px;top:154px;font-size:11.5px;letter-spacing:-0.4px;color:#000;-webkit-text-stroke:0.1px #000;">111</div>
<div class="t" style="left:1353px;top:154px;font-size:11.5px;letter-spacing:-0.4px;color:#000;-webkit-text-stroke:0.1px #000;">UAH</div>
<div class="t" style="left:1442px;top:154px;font-size:11.5px;letter-spacing:-0.4px;color:#000;-webkit-text-stroke:0.1px #000;">2021-10-13T14:01:48.967000Z</div>
<div class="t" style="left:6px;top:173px;font-size:11.5px;letter-spacing:-0.4px;color:#000;-webkit-text-stroke:0.1px #000;">9</div>
<div class="t" style="left:39px;top:173px;font-size:11.5px;letter-spacing:-0.4px;color:#000;-webkit-text-stroke:0.1px #000;">6166de213e5f0d63a36eefff</div>
<div class="t" style="left:248px;top:173px;font-size:11.5px;letter-spacing:-0.4px;color:#000;-webkit-text-stroke:0.1px #000;">04000000-8</div>
<div class="t" style="left:321px;top:173px;font-size:11.5px;letter-spacing:-0.4px;color:#000;-webkit-text-stroke:0.1px #000;">BSE001-UA-20151013-48255</div>
<div class="t" style="left:479px;top:173px;font-size:11.5px;letter-spacing:-0.4px;color:#000;-webkit-text-stroke:0.1px #000;">Auction test title 13.10.2015 14:49</div>
<div class="t" style="left:736px;top:173px;font-size:11.5px;letter-spacing:-0.4px;color:#000;-webkit-text-stroke:0.1px #000;">Прийняття заяв на участь</div>
<div class="t" style="left:891px;top:173px;font-size:11.5px;letter-spacing:-0.4px;color:#000;-webkit-text-stroke:0.1px #000;">active_tendering</div>
<div class="t" style="left:986px;top:173px;font-size:11.5px;letter-spacing:-0.4px;color:#000;-webkit-text-stroke:0.1px #000;">Auction description</div>
<div class="t" style="left:1270px;top:173px;font-size:11.5px;letter-spacing:-0.4px;color:#000;-webkit-text-stroke:0.1px #000;">111</div>
<div class="t" style="left:1353px;top:173px;font-size:11.5px;letter-spacing:-0.4px;color:#000;-webkit-text-stroke:0.1px #000;">UAH</div>
<div class="t" style="left:1442px;top:173px;font-size:11.5px;letter-spacing:-0.4px;color:#000;-webkit-text-stroke:0.1px #000;">2015-10-13T13:24:49.994000Z</div>
<div class="t" style="left:6px;top:192px;font-size:11.5px;letter-spacing:-0.4px;color:#000;-webkit-text-stroke:0.1px #000;">10</div>
<div class="t" style="left:39px;top:192px;font-size:11.5px;letter-spacing:-0.4px;color:#000;-webkit-text-stroke:0.1px #000;">616062cc340a4d41b56135e6</div>
<div class="t" style="left:248px;top:192px;font-size:11.5px;letter-spacing:-0.4px;color:#000;-webkit-text-stroke:0.1px #000;">04000000-8</div>
<div class="t" style="left:321px;top:192px;font-size:11.5px;letter-spacing:-0.4px;color:#000;-webkit-text-stroke:0.1px #000;">LLE001-UA-20151008-17280</div>
<div class="t" style="left:479px;top:192px;font-size:11.5px;letter-spacing:-0.4px;color:#000;-webkit-text-stroke:0.1px #000;">title 37saac</div>
<div class="t" style="left:736px;top:192px;font-size:11.5px;letter-spacing:-0.4px;color:#000;-webkit-text-stroke:0.1px #000;">Прийняття заяв на участь</div>
<div class="t" style="left:891px;top:192px;font-size:11.5px;letter-spacing:-0.4px;color:#000;-webkit-text-stroke:0.1px #000;">active_tendering</div>
<div class="t" style="left:986px;top:192px;font-size:11.5px;letter-spacing:-0.4px;color:#000;-webkit-text-stroke:0.1px #000;">description 37saac</div>
<div class="t" style="left:1270px;top:192px;font-size:11.5px;letter-spacing:-0.4px;color:#000;-webkit-text-stroke:0.1px #000;">3460</div>
<div class="t" style="left:1353px;top:192px;font-size:11.5px;letter-spacing:-0.4px;color:#000;-webkit-text-stroke:0.1px #000;">UAH</div>
<div class="t" style="left:1442px;top:192px;font-size:11.5px;letter-spacing:-0.4px;color:#000;-webkit-text-stroke:0.1px #000;">2015-10-12T15:00:00.000000Z</div>
<div class="t" style="left:6px;top:211px;font-size:11.5px;letter-spacing:-0.4px;color:#000;-webkit-text-stroke:0.1px #000;">11</div>
<div class="t" style="left:39px;top:211px;font-size:11.5px;letter-spacing:-0.4px;color:#000;-webkit-text-stroke:0.1px #000;">6166d9c23e5f0d63a36eeff6</div>
<div class="t" style="left:248px;top:211px;font-size:11.5px;letter-spacing:-0.4px;color:#000;-webkit-text-stroke:0.1px #000;">48000000-8</div>
<div class="t" style="left:321px;top:211px;font-size:11.5px;letter-spacing:-0.4px;color:#000;-webkit-text-stroke:0.1px #000;">BSE001-UA-20151013-55249</div>
<div class="t" style="left:479px;top:211px;font-size:11.5px;letter-spacing:-0.4px;color:#000;-webkit-text-stroke:0.1px #000;">Auction test title 13.10.2015 16:04</div>
<div class="t" style="left:736px;top:211px;font-size:11.5px;letter-spacing:-0.4px;color:#000;-webkit-text-stroke:0.1px #000;">Прийняття заяв на участь</div>
<div class="t" style="left:891px;top:211px;font-size:11.5px;letter-spacing:-0.4px;color:#000;-webkit-text-stroke:0.1px #000;">active_tendering</div>
<div class="t" style="left:986px;top:211px;font-size:11.5px;letter-spacing:-0.4px;color:#000;-webkit-text-stroke:0.1px #000;">Auction description</div>
<div class="t" style="left:1270px;top:211px;font-size:11.5px;letter-spacing:-0.4px;color:#000;-webkit-text-stroke:0.1px #000;">111</div>
<div class="t" style="left:1353px;top:211px;font-size:11.5px;letter-spacing:-0.4px;color:#000;-webkit-text-stroke:0.1px #000;">UAH</div>
<div class="t" style="left:1442px;top:211px;font-size:11.5px;letter-spacing:-0.4px;color:#000;-webkit-text-stroke:0.1px #000;">2015-10-13T13:06:10.482000Z</div>
<div class="t" style="left:6px;top:230px;font-size:11.5px;letter-spacing:-0.4px;color:#000;-webkit-text-stroke:0.1px #000;">12</div>
<div class="t" style="left:39px;top:230px;font-size:11.5px;letter-spacing:-0.4px;color:#000;-webkit-text-stroke:0.1px #000;">6166d7823e5f0d63a36eeff4</div>
<div class="t" style="left:248px;top:230px;font-size:11.5px;letter-spacing:-0.4px;color:#000;-webkit-text-stroke:0.1px #000;">04000000-8</div>
<div class="t" style="left:321px;top:230px;font-size:11.5px;letter-spacing:-0.4px;color:#000;-webkit-text-stroke:0.1px #000;">BSE001-UA-20151013-13893</div>
<div class="t" style="left:479px;top:230px;font-size:11.5px;letter-spacing:-0.4px;color:#000;-webkit-text-stroke:0.1px #000;">Auction test title 13.10.2015 15:45</div>
<div class="t" style="left:736px;top:230px;font-size:11.5px;letter-spacing:-0.4px;color:#000;-webkit-text-stroke:0.1px #000;">Прийняття заяв на участь</div>
<div class="t" style="left:891px;top:230px;font-size:11.5px;letter-spacing:-0.4px;color:#000;-webkit-text-stroke:0.1px #000;">active_tendering</div>
<div class="t" style="left:986px;top:230px;font-size:11.5px;letter-spacing:-0.4px;color:#000;-webkit-text-stroke:0.1px #000;">Auction description</div>
<div class="t" style="left:1270px;top:230px;font-size:11.5px;letter-spacing:-0.4px;color:#000;-webkit-text-stroke:0.1px #000;">111</div>
<div class="t" style="left:1353px;top:230px;font-size:11.5px;letter-spacing:-0.4px;color:#000;-webkit-text-stroke:0.1px #000;">UAH</div>
<div class="t" style="left:1442px;top:230px;font-size:11.5px;letter-spacing:-0.4px;color:#000;-webkit-text-stroke:0.1px #000;">2015-10-13T12:56:34.163000Z</div>
<div class="t" style="left:6px;top:249px;font-size:11.5px;letter-spacing:-0.4px;color:#000;-webkit-text-stroke:0.1px #000;">13</div>
<div class="t" style="left:39px;top:249px;font-size:11.5px;letter-spacing:-0.4px;color:#000;-webkit-text-stroke:0.1px #000;">6166d33b3e5f0d63a36eefe4</div>
<div class="t" style="left:248px;top:249px;font-size:11.5px;letter-spacing:-0.4px;color:#000;-webkit-text-stroke:0.1px #000;">04000000-8</div>
<div class="t" style="left:321px;top:249px;font-size:11.5px;letter-spacing:-0.4px;color:#000;-webkit-text-stroke:0.1px #000;">BSE001-UA-20151013-07078</div>
<div class="t" style="left:479px;top:249px;font-size:11.5px;letter-spacing:-0.4px;color:#000;-webkit-text-stroke:0.1px #000;">Auction test title 13.10.2015 15:37</div>
<div class="t" style="left:736px;top:249px;font-size:11.5px;letter-spacing:-0.4px;color:#000;-webkit-text-stroke:0.1px #000;">Прийняття заяв на участь</div>
<div class="t" style="left:891px;top:249px;font-size:11.5px;letter-spacing:-0.4px;color:#000;-webkit-text-stroke:0.1px #000;">active_tendering</div>
<div class="t" style="left:986px;top:249px;font-size:11.5px;letter-spacing:-0.4px;color:#000;-webkit-text-stroke:0.1px #000;">Auction description</div>
<div class="t" style="left:1270px;top:249px;font-size:11.5px;letter-spacing:-0.4px;color:#000;-webkit-text-stroke:0.1px #000;">111</div>
<div class="t" style="left:1353px;top:249px;font-size:11.5px;letter-spacing:-0.4px;color:#000;-webkit-text-stroke:0.1px #000;">UAH</div>
<div class="t" style="left:1442px;top:249px;font-size:11.5px;letter-spacing:-0.4px;color:#000;-webkit-text-stroke:0.1px #000;">2015-10-13T12:38:19.288000Z</div>
<div class="t" style="left:6px;top:268px;font-size:11.5px;letter-spacing:-0.4px;color:#000;-webkit-text-stroke:0.1px #000;">14</div>
<div class="t" style="left:39px;top:268px;font-size:11.5px;letter-spacing:-0.4px;color:#000;-webkit-text-stroke:0.1px #000;">6166d1993e5f0d63a36eefdd</div>
<div class="t" style="left:248px;top:268px;font-size:11.5px;letter-spacing:-0.4px;color:#000;-webkit-text-stroke:0.1px #000;">04000000-8</div>
<div class="t" style="left:321px;top:268px;font-size:11.5px;letter-spacing:-0.4px;color:#000;-webkit-text-stroke:0.1px #000;">BSE001-UA-20151013-14348</div>
<div class="t" style="left:479px;top:268px;font-size:11.5px;letter-spacing:-0.4px;color:#000;-webkit-text-stroke:0.1px #000;">Auction test title 13.10.2015 15:30</div>
<div class="t" style="left:736px;top:268px;font-size:11.5px;letter-spacing:-0.4px;color:#000;-webkit-text-stroke:0.1px #000;">Прийняття заяв на участь</div>
<div class="t" style="left:891px;top:268px;font-size:11.5px;letter-spacing:-0.4px;color:#000;-webkit-text-stroke:0.1px #000;">active_tendering</div>
<div class="t" style="left:986px;top:268px;font-size:11.5px;letter-spacing:-0.4px;color:#000;-webkit-text-stroke:0.1px #000;">Auction description</div>
<div class="t" style="left:1270px;top:268px;font-size:11.5px;letter-spacing:-0.4px;color:#000;-webkit-text-stroke:0.1px #000;">111</div>
<div class="t" style="left:1353px;top:268px;font-size:11.5px;letter-spacing:-0.4px;color:#000;-webkit-text-stroke:0.1px #000;">UAH</div>
<div class="t" style="left:1442px;top:268px;font-size:11.5px;letter-spacing:-0.4px;color:#000;-webkit-text-stroke:0.1px #000;">2015-10-13T12:31:21.830000Z</div>
<div class="t" style="left:6px;top:287px;font-size:11.5px;letter-spacing:-0.4px;color:#000;-webkit-text-stroke:0.1px #000;">15</div>
<div class="t" style="left:39px;top:287px;font-size:11.5px;letter-spacing:-0.4px;color:#000;-webkit-text-stroke:0.1px #000;">6165b140279180d4e408b59d</div>
<div class="t" style="left:248px;top:287px;font-size:11.5px;letter-spacing:-0.4px;color:#000;-webkit-text-stroke:0.1px #000;">34621100-7</div>
<div class="t" style="left:321px;top:287px;font-size:11.5px;letter-spacing:-0.4px;color:#000;-webkit-text-stroke:0.1px #000;">RCE001-UA-20151012-03690</div>
<div class="t" style="left:479px;top:287px;font-size:11.5px;letter-spacing:-0.4px;color:#000;-webkit-text-stroke:0.1px #000;">cargo railway blablablabla test 2015-10-27T11:45...</div>
<div class="t" style="left:736px;top:287px;font-size:11.5px;letter-spacing:-0.4px;color:#000;-webkit-text-stroke:0.1px #000;">Прийняття заяв на участь</div>
<div class="t" style="left:891px;top:287px;font-size:11.5px;letter-spacing:-0.4px;color:#000;-webkit-text-stroke:0.1px #000;">active_tendering</div>
<div class="t" style="left:986px;top:287px;font-size:11.5px;letter-spacing:-0.4px;color:#000;-webkit-text-stroke:0.1px #000;">opisanie auctiona</div>
<div class="t" style="left:1270px;top:287px;font-size:11.5px;letter-spacing:-0.4px;color:#000;-webkit-text-stroke:0.1px #000;">555</div>
<div class="t" style="left:1353px;top:287px;font-size:11.5px;letter-spacing:-0.4px;color:#000;-webkit-text-stroke:0.1px #000;">UAH</div>
<div class="t" style="left:1442px;top:287px;font-size:11.5px;letter-spacing:-0.4px;color:#000;-webkit-text-stroke:0.1px #000;">2015-10-12T16:01:04.986000Z</div>
<div class="t" style="left:6px;top:306px;font-size:11.5px;letter-spacing:-0.4px;color:#000;-webkit-text-stroke:0.1px #000;">16</div>
<div class="t" style="left:39px;top:306px;font-size:11.5px;letter-spacing:-0.4px;color:#000;-webkit-text-stroke:0.1px #000;">a1156a4c88ba4a4e8cc8bc948bd45ce5</div>
<div class="t" style="left:248px;top:306px;font-size:11.5px;letter-spacing:-0.4px;color:#000;-webkit-text-stroke:0.1px #000;">04213000-4</div>
<div class="t" style="left:321px;top:306px;font-size:11.5px;letter-spacing:-0.4px;color:#000;-webkit-text-stroke:0.1px #000;">UA-PS-2015-10-13-000042-3</div>
<div class="t" style="left:479px;top:306px;font-size:11.5px;letter-spacing:-0.4px;color:#000;-webkit-text-stroke:0.1px #000;">Тестовий актив &#x27;gbvj5</div>
<div class="t" style="left:736px;top:306px;font-size:11.5px;letter-spacing:-0.4px;color:#000;-webkit-text-stroke:0.1px #000;">Період прийому пропозицій</div>
<div class="t" style="left:891px;top:306px;font-size:11.5px;letter-spacing:-0.4px;color:#000;-webkit-text-stroke:0.1px #000;">active.tendering</div>
<div class="t" style="left:986px;top:306px;font-size:11.5px;letter-spacing:-0.4px;color:#000;-webkit-text-stroke:0.1px #000;">Опис об&#x27;єкту приватизації gbvj5</div>
<div class="t" style="left:1270px;top:306px;font-size:11.5px;letter-spacing:-0.4px;color:#000;-webkit-text-stroke:0.1px #000;">1172.5</div>
<div class="t" style="left:1353px;top:306px;font-size:11.5px;letter-spacing:-0.4px;color:#000;-webkit-text-stroke:0.1px #000;">UAH</div>
<div class="t" style="left:1442px;top:306px;font-size:11.5px;letter-spacing:-0.4px;color:#000;-webkit-text-stroke:0.1px #000;">2015-10-13T12:11:07.264433+03:</div>
<div class="t" style="left:6px;top:325px;font-size:11.5px;letter-spacing:-0.4px;color:#000;-webkit-text-stroke:0.1px #000;">17</div>
<div class="t" style="left:39px;top:325px;font-size:11.5px;letter-spacing:-0.4px;color:#000;-webkit-text-stroke:0.1px #000;">6166cdc33e5f0d63a36eefcb</div>
<div class="t" style="left:248px;top:325px;font-size:11.5px;letter-spacing:-0.4px;color:#000;-webkit-text-stroke:0.1px #000;">34000000-7</div>
<div class="t" style="left:321px;top:325px;font-size:11.5px;letter-spacing:-0.4px;color:#000;-webkit-text-stroke:0.1px #000;">BSE001-UA-20151013-72612</div>
<div class="t" style="left:479px;top:325px;font-size:11.5px;letter-spacing:-0.4px;color:#000;-webkit-text-stroke:0.1px #000;">Auction test title 08.10.2015 11:45</div>
<div class="t" style="left:736px;top:325px;font-size:11.5px;letter-spacing:-0.4px;color:#000;-webkit-text-stroke:0.1px #000;">Прийняття заяв на участь</div>
<div class="t" style="left:891px;top:325px;font-size:11.5px;letter-spacing:-0.4px;color:#000;-webkit-text-stroke:0.1px #000;">active_tendering</div>
<div class="t" style="left:986px;top:325px;font-size:11.5px;letter-spacing:-0.4px;color:#000;-webkit-text-stroke:0.1px #000;">Auction description</div>
<div class="t" style="left:1270px;top:325px;font-size:11.5px;letter-spacing:-0.4px;color:#000;-webkit-text-stroke:0.1px #000;">111</div>
<div class="t" style="left:1353px;top:325px;font-size:11.5px;letter-spacing:-0.4px;color:#000;-webkit-text-stroke:0.1px #000;">UAH</div>
<div class="t" style="left:1442px;top:325px;font-size:11.5px;letter-spacing:-0.4px;color:#000;-webkit-text-stroke:0.1px #000;">2015-10-13T12:14:59.140000Z</div>
<div class="t" style="left:6px;top:344px;font-size:11.5px;letter-spacing:-0.4px;color:#000;-webkit-text-stroke:0.1px #000;">18</div>
<div class="t" style="left:39px;top:344px;font-size:11.5px;letter-spacing:-0.4px;color:#000;-webkit-text-stroke:0.1px #000;">6166a6ff3e5f0d63a36eeec2</div>
<div class="t" style="left:248px;top:344px;font-size:11.5px;letter-spacing:-0.4px;color:#000;-webkit-text-stroke:0.1px #000;">04110000-2</div>
<div class="t" style="left:321px;top:344px;font-size:11.5px;letter-spacing:-0.4px;color:#000;-webkit-text-stroke:0.1px #000;">BSD001-UA-20151013-45111</div>
<div class="t" style="left:479px;top:344px;font-size:11.5px;letter-spacing:-0.4px;color:#000;-webkit-text-stroke:0.1px #000;">BSD 101</div>
<div class="t" style="left:736px;top:344px;font-size:11.5px;letter-spacing:-0.4px;color:#000;-webkit-text-stroke:0.1px #000;">Прийняття заяв на участь</div>
<div class="t" style="left:891px;top:344px;font-size:11.5px;letter-spacing:-0.4px;color:#000;-webkit-text-stroke:0.1px #000;">active_tendering</div>
<div class="t" style="left:986px;top:344px;font-size:11.5px;letter-spacing:-0.4px;color:#000;-webkit-text-stroke:0.1px #000;">Опис аукціону</div>
<div class="t" style="left:1270px;top:344px;font-size:11.5px;letter-spacing:-0.4px;color:#000;-webkit-text-stroke:0.1px #000;">1000</div>
<div class="t" style="left:1353px;top:344px;font-size:11.5px;letter-spacing:-0.4px;color:#000;-webkit-text-stroke:0.1px #000;">UAH</div>
<div class="t" style="left:1442px;top:344px;font-size:11.5px;letter-spacing:-0.4px;color:#000;-webkit-text-stroke:0.1px #000;">2015-10-13T09:29:35.374000Z</div>
<div class="t" style="left:6px;top:363px;font-size:11.5px;letter-spacing:-0.4px;color:#000;-webkit-text-stroke:0.1px #000;">19</div>
<div class="t" style="left:39px;top:363px;font-size:11.5px;letter-spacing:-0.4px;color:#000;-webkit-text-stroke:0.1px #000;">6166b8723e5f0d63a36eeefc</div>
<div class="t" style="left:248px;top:363px;font-size:11.5px;letter-spacing:-0.4px;color:#000;-webkit-text-stroke:0.1px #000;">04000000-8</div>
<div class="t" style="left:321px;top:363px;font-size:11.5px;letter-spacing:-0.4px;color:#000;-webkit-text-stroke:0.1px #000;">BSE001-UA-20151013-36131</div>
<div class="t" style="left:479px;top:363px;font-size:11.5px;letter-spacing:-0.4px;color:#000;-webkit-text-stroke:0.1px #000;">Auction test title 13.10.2015 13:33</div>
<div class="t" style="left:736px;top:363px;font-size:11.5px;letter-spacing:-0.4px;color:#000;-webkit-text-stroke:0.1px #000;">Прийняття заяв на участь</div>
<div class="t" style="left:891px;top:363px;font-size:11.5px;letter-spacing:-0.4px;color:#000;-webkit-text-stroke:0.1px #000;">active_tendering</div>
<div class="t" style="left:986px;top:363px;font-size:11.5px;letter-spacing:-0.4px;color:#000;-webkit-text-stroke:0.1px #000;">Auction description</div>
<div class="t" style="left:1270px;top:363px;font-size:11.5px;letter-spacing:-0.4px;color:#000;-webkit-text-stroke:0.1px #000;">111</div>
<div class="t" style="left:1353px;top:363px;font-size:11.5px;letter-spacing:-0.4px;color:#000;-webkit-text-stroke:0.1px #000;">UAH</div>
<div class="t" style="left:1442px;top:363px;font-size:11.5px;letter-spacing:-0.4px;color:#000;-webkit-text-stroke:0.1px #000;">2015-10-13T10:44:02.481000Z</div>
<div class="t" style="left:6px;top:382px;font-size:11.5px;letter-spacing:-0.4px;color:#000;-webkit-text-stroke:0.1px #000;">20</div>
<div class="t" style="left:39px;top:382px;font-size:11.5px;letter-spacing:-0.4px;color:#000;-webkit-text-stroke:0.1px #000;">a88ada6d0ad24fc0a36747835a222e69</div>
<div class="t" style="left:248px;top:382px;font-size:11.5px;letter-spacing:-0.4px;color:#000;-webkit-text-stroke:0.1px #000;">18132000-3</div>
<div class="t" style="left:321px;top:382px;font-size:11.5px;letter-spacing:-0.4px;color:#000;-webkit-text-stroke:0.1px #000;">UA-PS-2015-10-13-000008-2</div>
<div class="t" style="left:479px;top:382px;font-size:11.5px;letter-spacing:-0.4px;color:#000;-webkit-text-stroke:0.1px #000;">[ТЕСТУВАННЯ] case 1</div>
<div class="t" style="left:736px;top:382px;font-size:11.5px;letter-spacing:-0.4px;color:#000;-webkit-text-stroke:0.1px #000;">Період прийому пропозицій</div>
<div class="t" style="left:891px;top:382px;font-size:11.5px;letter-spacing:-0.4px;color:#000;-webkit-text-stroke:0.1px #000;">active.tendering</div>
<div class="t" style="left:986px;top:382px;font-size:11.5px;letter-spacing:-0.4px;color:#000;-webkit-text-stroke:0.1px #000;">asfdasfdasf</div>
<div class="t" style="left:1270px;top:382px;font-size:11.5px;letter-spacing:-0.4px;color:#000;-webkit-text-stroke:0.1px #000;">100</div>
<div class="t" style="left:1353px;top:382px;font-size:11.5px;letter-spacing:-0.4px;color:#000;-webkit-text-stroke:0.1px #000;">UAH</div>
<div class="t" style="left:1442px;top:382px;font-size:11.5px;letter-spacing:-0.4px;color:#000;-webkit-text-stroke:0.1px #000;">2015-10-13T11:53:04.945773+03:</div>
<div class="t" style="left:6px;top:401px;font-size:11.5px;letter-spacing:-0.4px;color:#000;-webkit-text-stroke:0.1px #000;">21</div>
<div class="t" style="left:39px;top:401px;font-size:11.5px;letter-spacing:-0.4px;color:#000;-webkit-text-stroke:0.1px #000;">61655f14279180d4e408b3e2</div>
<div class="t" style="left:248px;top:401px;font-size:11.5px;letter-spacing:-0.4px;color:#000;-webkit-text-stroke:0.1px #000;">06127000-8</div>
<div class="t" style="left:321px;top:401px;font-size:11.5px;letter-spacing:-0.4px;color:#000;-webkit-text-stroke:0.1px #000;">LSE001-UA-20151012-79843</div>
<div class="t" style="left:479px;top:401px;font-size:11.5px;letter-spacing:-0.4px;color:#000;-webkit-text-stroke:0.1px #000;">land_sell</div>
<div class="t" style="left:736px;top:401px;font-size:11.5px;letter-spacing:-0.4px;color:#000;-webkit-text-stroke:0.1px #000;">Прийняття заяв на участь</div>
<div class="t" style="left:891px;top:401px;font-size:11.5px;letter-spacing:-0.4px;color:#000;-webkit-text-stroke:0.1px #000;">active_tendering</div>
<div class="t" style="left:986px;top:401px;font-size:11.5px;letter-spacing:-0.4px;color:#000;-webkit-text-stroke:0.1px #000;">sadasdsa</div>
<div class="t" style="left:1270px;top:401px;font-size:11.5px;letter-spacing:-0.4px;color:#000;-webkit-text-stroke:0.1px #000;">121</div>
<div class="t" style="left:1353px;top:401px;font-size:11.5px;letter-spacing:-0.4px;color:#000;-webkit-text-stroke:0.1px #000;">UAH</div>
<div class="t" style="left:1442px;top:401px;font-size:11.5px;letter-spacing:-0.4px;color:#000;-webkit-text-stroke:0.1px #000;">2015-10-12T10:10:58.629000Z</div>
<div class="t" style="left:6px;top:420px;font-size:11.5px;letter-spacing:-0.4px;color:#000;-webkit-text-stroke:0.1px #000;">22</div>
<div class="t" style="left:39px;top:420px;font-size:11.5px;letter-spacing:-0.4px;color:#000;-webkit-text-stroke:0.1px #000;">616585cd279180d4e408b4d4</div>
<div class="t" style="left:248px;top:420px;font-size:11.5px;letter-spacing:-0.4px;color:#000;-webkit-text-stroke:0.1px #000;">04110000-2</div>
<div class="t" style="left:321px;top:420px;font-size:11.5px;letter-spacing:-0.4px;color:#000;-webkit-text-stroke:0.1px #000;">BSE001-UA-20151012-56270</div>
<div class="t" style="left:479px;top:420px;font-size:11.5px;letter-spacing:-0.4px;color:#000;-webkit-text-stroke:0.1px #000;">BSE 101 edited1111111</div>
<div class="t" style="left:736px;top:420px;font-size:11.5px;letter-spacing:-0.4px;color:#000;-webkit-text-stroke:0.1px #000;">Прийняття заяв на участь</div>
<div class="t" style="left:891px;top:420px;font-size:11.5px;letter-spacing:-0.4px;color:#000;-webkit-text-stroke:0.1px #000;">active_tendering</div>
<div class="t" style="left:986px;top:420px;font-size:11.5px;letter-spacing:-0.4px;color:#000;-webkit-text-stroke:0.1px #000;">desc edited222222222</div>
<div class="t" style="left:1270px;top:420px;font-size:11.5px;letter-spacing:-0.4px;color:#000;-webkit-text-stroke:0.1px #000;">11000</div>
<div class="t" style="left:1353px;top:420px;font-size:11.5px;letter-spacing:-0.4px;color:#000;-webkit-text-stroke:0.1px #000;">UAH</div>
<div class="t" style="left:1442px;top:420px;font-size:11.5px;letter-spacing:-0.4px;color:#000;-webkit-text-stroke:0.1px #000;">2015-10-12T12:55:41.689000Z</div>
<div class="t" style="left:6px;top:439px;font-size:11.5px;letter-spacing:-0.4px;color:#000;-webkit-text-stroke:0.1px #000;">23</div>
<div class="t" style="left:39px;top:439px;font-size:11.5px;letter-spacing:-0.4px;color:#000;-webkit-text-stroke:0.1px #000;">6166c5253e5f0d63a36eef53</div>
<div class="t" style="left:248px;top:439px;font-size:11.5px;letter-spacing:-0.4px;color:#000;-webkit-text-stroke:0.1px #000;">04000000-8</div>
<div class="t" style="left:321px;top:439px;font-size:11.5px;letter-spacing:-0.4px;color:#000;-webkit-text-stroke:0.1px #000;">BSE001-UA-20151013-77721</div>
<div class="t" style="left:479px;top:439px;font-size:11.5px;letter-spacing:-0.4px;color:#000;-webkit-text-stroke:0.1px #000;">13-2</div>
<div class="t" style="left:736px;top:439px;font-size:11.5px;letter-spacing:-0.4px;color:#000;-webkit-text-stroke:0.1px #000;">Прийняття заяв на участь</div>
<div class="t" style="left:891px;top:439px;font-size:11.5px;letter-spacing:-0.4px;color:#000;-webkit-text-stroke:0.1px #000;">active_tendering</div>
<div class="t" style="left:986px;top:439px;font-size:11.5px;letter-spacing:-0.4px;color:#000;-webkit-text-stroke:0.1px #000;">Опис аукціону</div>
<div class="t" style="left:1270px;top:439px;font-size:11.5px;letter-spacing:-0.4px;color:#000;-webkit-text-stroke:0.1px #000;">10000</div>
<div class="t" style="left:1353px;top:439px;font-size:11.5px;letter-spacing:-0.4px;color:#000;-webkit-text-stroke:0.1px #000;">UAH</div>
<div class="t" style="left:1442px;top:439px;font-size:11.5px;letter-spacing:-0.4px;color:#000;-webkit-text-stroke:0.1px #000;">2015-10-13T11:38:13.499000Z</div>
<div class="t" style="left:6px;top:458px;font-size:11.5px;letter-spacing:-0.4px;color:#000;-webkit-text-stroke:0.1px #000;">24</div>
<div class="t" style="left:39px;top:458px;font-size:11.5px;letter-spacing:-0.4px;color:#000;-webkit-text-stroke:0.1px #000;">6166c19c3e5f0d63a36eef3c</div>
<div class="t" style="left:248px;top:458px;font-size:11.5px;letter-spacing:-0.4px;color:#000;-webkit-text-stroke:0.1px #000;">04000000-8</div>
<div class="t" style="left:321px;top:458px;font-size:11.5px;letter-spacing:-0.4px;color:#000;-webkit-text-stroke:0.1px #000;">BSE001-UA-20151013-79631</div>
<div class="t" style="left:479px;top:458px;font-size:11.5px;letter-spacing:-0.4px;color:#000;-webkit-text-stroke:0.1px #000;">Auction test title 13.10.2015 14:20</div>
<div class="t" style="left:736px;top:458px;font-size:11.5px;letter-spacing:-0.4px;color:#000;-webkit-text-stroke:0.1px #000;">Прийняття заяв на участь</div>
<div class="t" style="left:891px;top:458px;font-size:11.5px;letter-spacing:-0.4px;color:#000;-webkit-text-stroke:0.1px #000;">active_tendering</div>
<div class="t" style="left:986px;top:458px;font-size:11.5px;letter-spacing:-0.4px;color:#000;-webkit-text-stroke:0.1px #000;">Auction description</div>
<div class="t" style="left:1270px;top:458px;font-size:11.5px;letter-spacing:-0.4px;color:#000;-webkit-text-stroke:0.1px #000;">111</div>
<div class="t" style="left:1353px;top:458px;font-size:11.5px;letter-spacing:-0.4px;color:#000;-webkit-text-stroke:0.1px #000;">UAH</div>
<div class="t" style="left:1442px;top:458px;font-size:11.5px;letter-spacing:-0.4px;color:#000;-webkit-text-stroke:0.1px #000;">2015-10-13T11:23:08.507000Z</div>
<div class="t" style="left:6px;top:477px;font-size:11.5px;letter-spacing:-0.4px;color:#000;-webkit-text-stroke:0.1px #000;">25</div>
<div class="t" style="left:39px;top:477px;font-size:11.5px;letter-spacing:-0.4px;color:#000;-webkit-text-stroke:0.1px #000;">63b30f266ba1453e9c11be6c7d38b3fe</div>
<div class="t" style="left:248px;top:477px;font-size:11.5px;letter-spacing:-0.4px;color:#000;-webkit-text-stroke:0.1px #000;">03221430-9</div>
<div class="t" style="left:321px;top:477px;font-size:11.5px;letter-spacing:-0.4px;color:#000;-webkit-text-stroke:0.1px #000;">UA-PS-2015-10-13-000040-3</div>
<div class="t" style="left:479px;top:477px;font-size:11.5px;letter-spacing:-0.4px;color:#000;-webkit-text-stroke:0.1px #000;">Front-line asynchronous array</div>
<div class="t" style="left:736px;top:477px;font-size:11.5px;letter-spacing:-0.4px;color:#000;-webkit-text-stroke:0.1px #000;">Період прийому пропозицій</div>
<div class="t" style="left:891px;top:477px;font-size:11.5px;letter-spacing:-0.4px;color:#000;-webkit-text-stroke:0.1px #000;">active.tendering</div>
<div class="t" style="left:986px;top:477px;font-size:11.5px;letter-spacing:-0.4px;color:#000;-webkit-text-stroke:0.1px #000;">Extended background architecture</div>
<div class="t" style="left:1270px;top:477px;font-size:11.5px;letter-spacing:-0.4px;color:#000;-webkit-text-stroke:0.1px #000;">9911</div>
<div class="t" style="left:1353px;top:477px;font-size:11.5px;letter-spacing:-0.4px;color:#000;-webkit-text-stroke:0.1px #000;">UAH</div>
<div class="t" style="left:1442px;top:477px;font-size:11.5px;letter-spacing:-0.4px;color:#000;-webkit-text-stroke:0.1px #000;">2015-10-13T11:14:50.185851+03:</div>
</div>
<div style="left:1891px;top:474px;width:17px;height:508px;background:#E8E8EC;"></div>
<div style="left:1896px;top:490px;width:8px;height:221px;background:#C2C3C9;"></div>
<svg style="left:1895px;top:480px;" width="9" height="5" viewBox="0 0 9 5"><path d="M0 5H9L4.5 0Z" fill="#868999"/></svg>
<svg style="left:1895px;top:953px;" width="9" height="5" viewBox="0 0 9 5"><path d="M0 0H9L4.5 5Z" fill="#868999"/></svg>
<div style="left:286px;top:966px;width:1605px;height:16px;background:#E8E8EC;"></div>
<div style="left:302px;top:969px;width:534px;height:10px;background:#C2C3C9;"></div>
<svg style="left:291px;top:969px;" width="5" height="9" viewBox="0 0 5 9"><path d="M5 0V9L0 4.5Z" fill="#868999"/></svg>
<svg style="left:1882px;top:969px;" width="5" height="9" viewBox="0 0 5 9"><path d="M0 0V9L5 4.5Z" fill="#868999"/></svg>
<div style="left:281px;top:989px;width:1633px;height:21px;background:#EEE49A;"></div>
<svg style="left:286px;top:992px;" width="15" height="15" viewBox="0 0 15 15"><circle cx="7.5" cy="7.5" r="7" fill="#2E9E3E" stroke="#E8E8E8" stroke-width="1"/><path d="M4 7.5L6.5 10L11 5" stroke="#fff" stroke-width="2" fill="none"/></svg>
<div class="t" style="left:304px;top:992px;font-size:11.7px;">Query executed successfully.</div>
<div style="left:1478px;top:993px;width:1px;height:14px;background:#B8B290;"></div>
<div style="left:1624px;top:993px;width:1px;height:14px;background:#B8B290;"></div>
<div style="left:1740px;top:993px;width:1px;height:14px;background:#B8B290;"></div>
<div style="left:1794px;top:993px;width:1px;height:14px;background:#B8B290;"></div>
<div style="left:1850px;top:993px;width:1px;height:14px;background:#B8B290;"></div>
<div class="t" style="left:1484px;top:992px;font-size:11.7px;">7</div>
<div style="left:1492px;top:991px;width:64px;height:17px;background:#444848;border-radius:8px;"></div>
<div class="t" style="left:1556px;top:992px;font-size:11.3px;letter-spacing:-0.5px;">8 (14.0 RTM)</div>
<div class="t" style="left:1630px;top:992px;font-size:11.2px;">in</div>
<div style="left:1642px;top:991px;width:41px;height:17px;background:#444848;border-radius:8px;"></div>
<div class="t" style="left:1683px;top:992px;font-size:11.2px;">user (150)</div>
<div class="t" style="left:1746px;top:992px;font-size:11.2px;">fgv_test</div>
<div class="t" style="left:1800px;top:992px;font-size:11.2px;">00:01:14</div>
<div class="t" style="left:1855px;top:992px;font-size:11.2px;">50 rows</div>
<div style="left:0px;top:1017px;width:1920px;height:23px;background:#007ACC;"></div>
<div class="t" style="left:5px;top:1022px;color:#fff;font-size:11.7px;">Ready</div>
<div class="t" style="left:1160px;top:1022px;color:#fff;font-size:11.3px;">Ln 178</div>
<div class="t" style="left:1252px;top:1022px;color:#fff;font-size:11.3px;">Col 1</div>
<div class="t" style="left:1345px;top:1022px;color:#fff;font-size:11.3px;">Ch 1</div>
<div class="t" style="left:1480px;top:1022px;color:#fff;font-size:11.3px;">INS</div>
<div style="left:0px;top:1040px;width:1920px;height:40px;background:#1F2A29;"></div>
<div style="left:590px;top:1040px;width:48px;height:40px;background:#3A4443;"></div>
<div style="left:251px;top:1078px;width:39px;height:2px;background:#7FB8E8;"></div>
<div style="left:349px;top:1078px;width:39px;height:2px;background:#7FB8E8;"></div>
<div style="left:398px;top:1078px;width:39px;height:2px;background:#7FB8E8;"></div>
<div style="left:590px;top:1078px;width:48px;height:2px;background:#7FB8E8;"></div>
<div style="left:790px;top:1078px;width:39px;height:2px;background:#7FB8E8;"></div>
<div style="left:891px;top:1078px;width:39px;height:2px;background:#7FB8E8;"></div>
<div style="left:938px;top:1078px;width:30px;height:2px;background:#7FB8E8;"></div>
<svg style="left:16px;top:1052px;" width="16" height="16" viewBox="0 0 16 16"><g fill="#fff"><path d="M0 2.3L6.5 1.4V7.5H0z"/><path d="M7.5 1.3L16 0V7.5H7.5z"/><path d="M0 8.5h6.5v6.1L0 13.7z"/><path d="M7.5 8.5H16V16L7.5 14.8z"/></g></svg>
<svg style="left:62px;top:1048px;" width="24" height="24" viewBox="0 0 24 24"><path d="M1 5h8l2 2h12v14H1z" fill="#E8B84A"/><path d="M1 9h22v12H1z" fill="#F5CE62"/><rect x="7" y="14" width="10" height="4" fill="#2F7BD0"/><rect x="10" y="18" width="4" height="3" fill="#2F7BD0"/></svg>
<svg style="left:110px;top:1048px;" width="24" height="24" viewBox="0 0 24 24"><rect x="1" y="3" width="22" height="18" fill="#111" stroke="#888" stroke-width="1"/><path d="M4 9h5M12 12h7" stroke="#ddd" stroke-width="1.2"/><text x="4" y="10" font-size="5" fill="#ddd" font-family="Liberation Mono">C:\</text></svg>
<svg style="left:161px;top:1048px;" width="24" height="24" viewBox="0 0 24 24"><path d="M10 3L21 6L19 21L8 19z" fill="#4A9E3A"/><path d="M10 3L21 6L20 12L9 11z" fill="#F08A24"/><path d="M14 12L20 13L19 21L13 20z" fill="#2A7FD0"/><circle cx="9" cy="10" r="6" fill="none" stroke="#bbb" stroke-width="2"/><path d="M5 14L1 20" stroke="#ccc" stroke-width="3"/></svg>
<svg style="left:210px;top:1048px;" width="24" height="24" viewBox="0 0 24 24"><rect x="1" y="2" width="22" height="20" fill="#0A1C3E" stroke="#4E8FE0" stroke-width="1.5"/><text x="4" y="17" font-size="12" font-weight="bold" fill="#4E9FF0" font-family="Liberation Sans">Ps</text></svg>
<svg style="left:259px;top:1048px;" width="24" height="24" viewBox="0 0 24 24"><circle cx="12" cy="13" r="10" fill="#FF7A1A"/><circle cx="12" cy="13" r="6" fill="#7B3FC8"/><path d="M6 4Q12 0 18 6Q14 4 10 6z" fill="#FFC52A"/><path d="M3 9Q2 16 8 21Q4 14 7 10z" fill="#FF4F3A"/></svg>
<svg style="left:308px;top:1048px;" width="24" height="24" viewBox="0 0 24 24"><rect x="2" y="2" width="20" height="20" fill="#1A2CA8"/><rect x="5" y="2" width="12" height="7" fill="#E0E0F0"/><rect x="13" y="3" width="3" height="5" fill="#1A2CA8"/><rect x="4" y="12" width="16" height="9" fill="#E8E8F4"/><path d="M5 14h14M5 16h14M5 18h14" stroke="#E03030" stroke-width="1.2"/></svg>
<svg style="left:357px;top:1048px;" width="24" height="24" viewBox="0 0 24 24"><ellipse cx="12" cy="14" rx="9" ry="6" fill="none" stroke="#F0A020" stroke-width="2.5"/><circle cx="12" cy="14" r="3" fill="#D02020"/><path d="M6 6l2 3M12 4v4M18 6l-2 3M2 10l3 1M22 10l-3 1" stroke="#F0A020" stroke-width="2"/></svg>
<svg style="left:406px;top:1048px;" width="24" height="24" viewBox="0 0 24 24"><path d="M3 3h15l3 3v16H3z" fill="#F4F4F4"/><rect x="3" y="3" width="18" height="19" fill="none" stroke="#7CB342" stroke-width="1.5"/><path d="M6 8v8M9 11h5" stroke="#333" stroke-width="1.5"/><path d="M15 16L22 2" stroke="#F2B020" stroke-width="2.5"/><rect x="3" y="14" width="18" height="8" fill="#9CCC45" opacity="0.6"/></svg>
<svg style="left:455px;top:1048px;" width="24" height="24" viewBox="0 0 24 24"><path d="M6 4l14-2 2 16-14 3z" fill="#8BC34A"/><path d="M3 8l14-2 2 15-14 2z" fill="#E8F0D8" stroke="#7AA03A"/><text x="8" y="9" font-size="6" fill="#fff" font-style="italic" font-family="Liberation Sans" transform="rotate(-10 12 8)">LITE</text></svg>
<svg style="left:504px;top:1048px;" width="24" height="24" viewBox="0 0 24 24"><path d="M4 5L18 1L21 18L7 22z" fill="#D8EEF8"/><path d="M4 5L18 1L19 5L5 9z" fill="#7EC0E0"/><path d="M7 10l11-3M8 13l11-3M9 16l10-3" stroke="#A8D0E8"/></svg>
<svg style="left:553px;top:1048px;" width="24" height="24" viewBox="0 0 24 24"><rect x="1" y="3" width="22" height="18" rx="3" fill="#111" stroke="#666"/><text x="3" y="17" font-size="11" font-weight="bold" fill="#5AA0F0" font-family="Liberation Sans">m</text><text x="11" y="17" font-size="12" font-weight="bold" fill="#eee" font-family="Liberation Sans">R</text></svg>
<svg style="left:602px;top:1048px;" width="24" height="24" viewBox="0 0 24 24"><path d="M3 5Q3 2 9 2Q15 2 15 5V17Q15 20 9 20Q3 20 3 17Z" fill="#F2B826"/><ellipse cx="9" cy="5" rx="6" ry="3" fill="#FCE8A8"/><path d="M17 2h5v5M2 18v4h5" stroke="#3CAF3C" stroke-width="1.5" fill="none"/><path d="M11 21L21 11M12 12L21 21" stroke="#ccc" stroke-width="2"/></svg>
<svg style="left:650px;top:1048px;" width="24" height="24" viewBox="0 0 24 24"><rect x="2" y="3" width="20" height="16" fill="#F0F0F0" stroke="#aaa"/><rect x="4" y="7" width="9" height="10" fill="#6FA88C"/><rect x="15" y="5" width="5" height="2" fill="#4A88D0"/><circle cx="18" cy="18" r="5" fill="#eee"/><rect x="15.5" y="15.5" width="5" height="5" fill="#E03030"/></svg>
<svg style="left:699px;top:1048px;" width="24" height="24" viewBox="0 0 24 24"><path d="M3 3L19 1V15L3 16z" fill="#2060D0" stroke="#ccc"/><path d="M5 5L17 3.5V13L5 14z" fill="#3A8AF0"/><ellipse cx="12" cy="20" rx="6" ry="2" fill="#ccc"/><circle cx="18" cy="18" r="5" fill="#ddd"/><path d="M15 18l2-2M21 18l-2 2" stroke="#2A9A4A" stroke-width="1.5"/></svg>
<svg style="left:748px;top:1048px;" width="24" height="24" viewBox="0 0 24 24"><path d="M2 8h20v14H2z" fill="#F8F8F8" stroke="#ccc"/><path d="M2 4l19-3 1 5-19 3z" fill="#222"/><path d="M5 3.5l2 4M10 2.7l2 4M15 2l2 4" stroke="#fff" stroke-width="1.5"/><text x="3" y="20" font-size="10" font-weight="bold" font-family="Liberation Sans"><tspan fill="#E06020">3</tspan><tspan fill="#2A70C0">2</tspan><tspan fill="#3A9A3A">1</tspan></text></svg>
<svg style="left:798px;top:1048px;" width="24" height="24" viewBox="0 0 24 24"><path d="M17 1L23 4V20L17 23L7 14L3 17L1 16V8L3 7L7 10z" fill="#8F55CC"/><path d="M17 7V17L10 12z" fill="#1F2A29"/><path d="M17 1L23 4V20L17 23z" fill="#B184E8"/></svg>
<svg style="left:847px;top:1048px;" width="24" height="24" viewBox="0 0 24 24"><rect x="1" y="1" width="22" height="22" fill="#B01818"/><text x="3" y="19" font-size="17" font-weight="bold" font-style="italic" fill="#fff" font-family="Liberation Sans">Fz</text></svg>
<svg style="left:896px;top:1048px;" width="24" height="24" viewBox="0 0 24 24"><path d="M8 2L3 10l3 4 4-6z" fill="#2A9AF0"/><path d="M16 2l5 8-3 4-4-6z" fill="#2A9AF0"/><path d="M4 16l8 6 8-6-3-2-5 3-5-3z" fill="#1A6AE0"/></svg>
<svg style="left:945px;top:1048px;" width="24" height="24" viewBox="0 0 24 24"><rect x="1" y="1" width="22" height="22" fill="#E8433A"/><path d="M5 12l5-5 5 5-5 5z" fill="#fff"/><path d="M14 7l5 5-5 5" stroke="#fff" stroke-width="2" fill="none"/></svg>
<svg style="left:1433px;top:1050px;" width="24" height="20" viewBox="0 0 24 20"><circle cx="9" cy="7" r="5" fill="#F5C020"/><path d="M3 18Q0 18 1 14Q2 11 6 12Q8 8 13 9Q17 9 18 13Q22 13 22 16Q22 18 19 18z" fill="#D8E8F4"/></svg>
<div class="t" style="left:1464px;top:1052px;color:#fff;font-size:14.2px;line-height:17px;">15°C</div>
<div class="t" style="left:1503px;top:1052px;color:#fff;font-size:14.2px;line-height:17px;">Mostly cloudy</div>
<svg style="left:1605px;top:1055px;" width="11" height="7" viewBox="0 0 11 7"><path d="M0.5 6.5L5.5 1L10.5 6.5" stroke="#fff" stroke-width="1.3" fill="none"/></svg>
<svg style="left:1628px;top:1052px;" width="15" height="16" viewBox="0 0 15 16"><ellipse cx="7.5" cy="4" rx="6.5" ry="3" fill="#A8C8E8"/><rect x="1" y="4" width="13" height="9" fill="#8AB0D8"/><ellipse cx="7.5" cy="13" rx="6.5" ry="3" fill="#7AA0C8"/><path d="M1 8h13" stroke="#C8E0F4"/></svg>
<svg style="left:1651px;top:1051px;" width="16" height="16" viewBox="0 0 16 16"><circle cx="8" cy="8" r="6" fill="none" stroke="#000" stroke-width="3"/><circle cx="8" cy="2" r="2" fill="#000"/><circle cx="2.5" cy="11" r="2" fill="#000"/><circle cx="13.5" cy="11" r="2" fill="#000"/></svg>
<svg style="left:1675px;top:1052px;" width="16" height="16" viewBox="0 0 16 16"><rect x="0.5" y="0.5" width="15" height="15" fill="#20E020" stroke="#2040A0"/><text x="3" y="13" font-size="12" font-style="italic" fill="#111" font-family="Liberation Serif">F</text></svg>
<svg style="left:1701px;top:1051px;" width="12" height="17" viewBox="0 0 12 17"><rect x="1" y="1" width="10" height="15" rx="5" fill="#E8E8E8"/><path d="M6 1v6M1 7h10" stroke="#999"/></svg>
<svg style="left:1722px;top:1052px;" width="17" height="15" viewBox="0 0 17 15"><rect x="4" y="2" width="12" height="9" fill="none" stroke="#fff" stroke-width="1.2"/><path d="M10 11v3M6 14h8" stroke="#fff" stroke-width="1.2"/><rect x="1" y="1" width="4" height="5" fill="#1F2A29" stroke="#fff"/></svg>
<svg style="left:1746px;top:1052px;" width="17" height="15" viewBox="0 0 17 15"><path d="M1 5h3l4-4v13l-4-4H1z" fill="none" stroke="#fff" stroke-width="1.2"/><path d="M10 4Q12 7.5 10 11M12.5 2Q15.5 7.5 12.5 13" stroke="#aaa" stroke-width="1.1" fill="none"/></svg>
<div class="t" style="left:1773px;top:1053px;color:#fff;font-size:12px;letter-spacing:-0.3px;line-height:16px;">ENG</div>
<div class="t" style="left:1814px;top:1044px;color:#fff;font-size:12.4px;letter-spacing:-0.3px;line-height:15px;">6:08 PM</div>
<div class="t" style="left:1807px;top:1063px;color:#fff;font-size:12.4px;letter-spacing:-0.6px;line-height:15px;">10/13/2015</div>
<svg style="left:1879px;top:1050px;" width="20" height="22" viewBox="0 0 20 22"><path d="M1 1h15v10H6l-3 3v-3H1z" fill="#fff"/><path d="M4 4h9M4 6h9M4 8h7" stroke="#1F2A29"/><circle cx="14.5" cy="16" r="7" fill="#2A3332" stroke="#9A9A9A" stroke-width="1.2"/><text x="11.3" y="20.5" font-size="11" fill="#fff" font-family="Liberation Sans">5</text></svg>
<div style="left:1915px;top:1040px;width:1px;height:40px;background:#5A6463;"></div>
<div class="t" style="left:1599px;top:946px;color:rgba(150,150,150,0.62);font-size:19.7px;line-height:23px;">Activate Windows</div>
<div class="t" style="left:1599px;top:972px;color:rgba(150,150,150,0.55);font-size:14.9px;line-height:17px;">Go to Settings to activate Windows.</div>
<div style="left:1831px;top:1020px;width:53px;height:20px;background:#FFFFFF;border:1px solid #A0A0A0;"></div>
<div class="t" style="left:1836px;top:1023px;color:#575757;font-size:11.7px;">00:01:14</div>
<svg style="left:1829px;top:1004px;" width="12" height="19" viewBox="0 0 12 19"><path d="M0.5 0.5V16L4.5 12L7.5 18L10 17L7 11H12.5Z" fill="#fff" stroke="#000" stroke-width="1"/></svg>
</body></html>
